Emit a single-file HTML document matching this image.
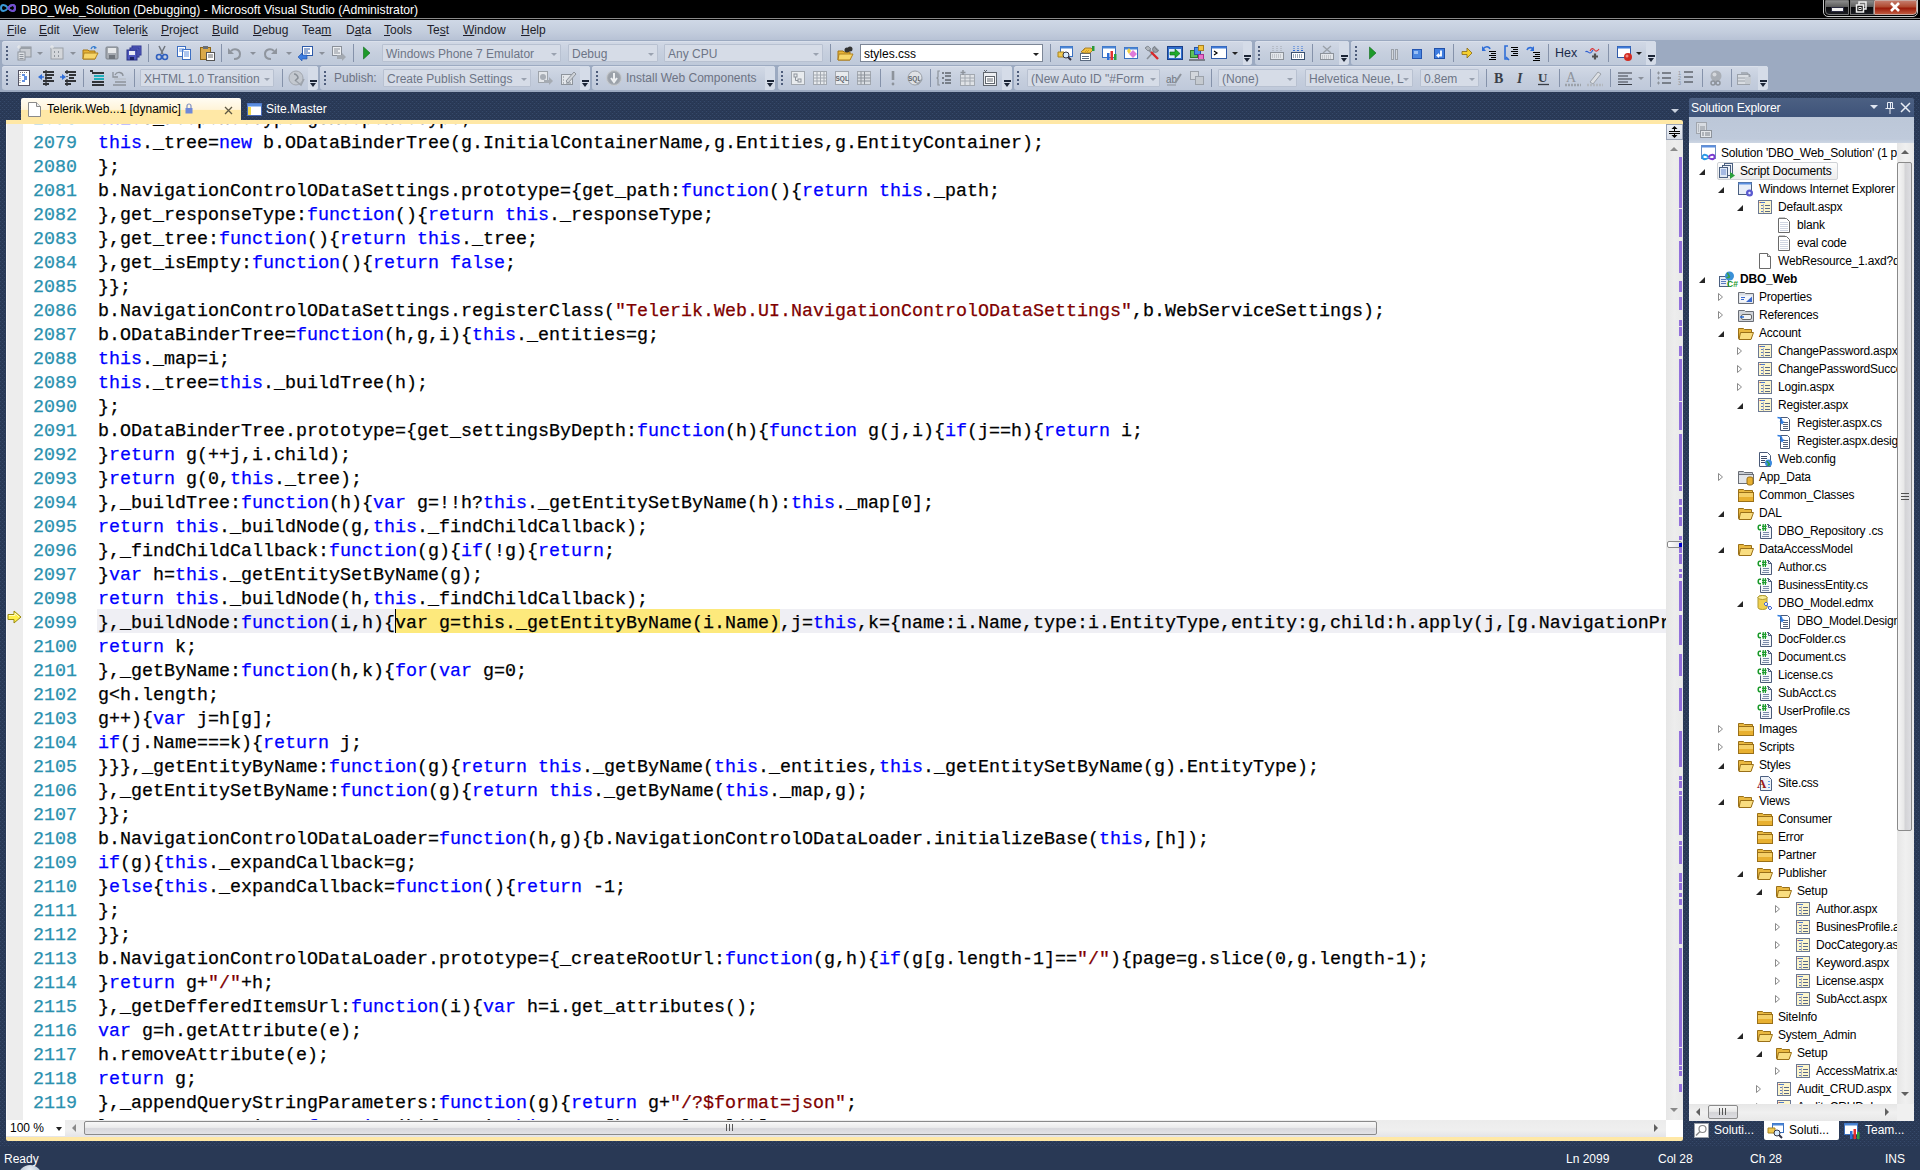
<!DOCTYPE html>
<html><head><meta charset="utf-8">
<style>
*{box-sizing:border-box}
html,body{margin:0;padding:0}
body{width:1920px;height:1170px;overflow:hidden;position:relative;background:#293955;font-family:"Liberation Sans",sans-serif;font-size:12px;color:#000}
.a{position:absolute}
.dots{background-color:#2a3a57;background-image:radial-gradient(circle at 0.5px 0.5px,#36496a 0.7px,transparent 0.8px),radial-gradient(circle at 0.5px 0.5px,#36496a 0.7px,transparent 0.8px),radial-gradient(circle at 0.5px 0.5px,#263551 0.7px,transparent 0.8px),radial-gradient(circle at 0.5px 0.5px,#263551 0.7px,transparent 0.8px);background-size:4px 4px;background-position:0 1px,2px 3px,0 0,2px 2px;background-attachment:fixed}
#title{left:0;top:0;width:1920px;height:18px;background:#000}
#menubar{left:0;top:20px;width:1920px;height:20px;background:linear-gradient(#cfd8e6,#c3cddd 60%,#b7c2d5)}
.mi{position:absolute;top:23px;font-size:12px;color:#1e1e2a;white-space:nowrap}
.mi u{text-decoration:underline;text-underline-offset:1px}
#tray{left:0;top:40px;width:1920px;height:52px;background:#9caac1}
.tb{position:absolute;height:24px;border-radius:3px;background:linear-gradient(#d2d9e6,#c6cfde 50%,#bfc9da);box-shadow:inset 0 1px 0 #dae0eb}
.tbo{position:absolute;height:24px;border-radius:0 3px 3px 0;background:#d5dce8}
.ovb{position:absolute;width:7px;height:1.5px;background:#1c2536}
.ovt{position:absolute;width:0;height:0;border-left:3.5px solid transparent;border-right:3.5px solid transparent;border-top:4px solid #1c2536}
.gd{position:absolute;width:2px;height:2px;background:#4e5d7b}
.sp{position:absolute;width:1px;height:18px;background:#8592aa}
.dd{position:absolute;width:0;height:0;border-left:3px solid transparent;border-right:3px solid transparent;border-top:3px solid #555}
.cb{position:absolute;height:18px;background:#d6dce7;border:1px solid #b8c1d1;border-radius:1px;color:#6d7586;overflow:hidden;white-space:nowrap}
.cb span,.cbw span{position:absolute;left:3px;top:2px;font-size:12px}
.cbw{position:absolute;height:18px;background:#fff;border:1px solid #7d8797;color:#000;overflow:hidden;white-space:nowrap}
.ic{position:absolute;overflow:visible}
.code{font-family:"Liberation Mono",monospace;font-size:18.333px;line-height:24px;white-space:pre}
.k{color:#0000ff}.s{color:#800000}
i,b{font-style:normal;font-weight:normal}
.ln{position:absolute;margin-top:3px;left:33px;-webkit-text-stroke:0.25px currentColor;width:44px;text-align:right;font-family:"Liberation Mono",monospace;font-size:18.333px;line-height:24px;color:#2b91af;white-space:pre}
.cl{position:absolute;margin-top:3px;left:98px;-webkit-text-stroke:0.25px currentColor;font-family:"Liberation Mono",monospace;font-size:18.333px;line-height:24px;color:#000;white-space:pre}


.exe{position:absolute;width:0;height:0;border-bottom:6px solid #262626;border-left:6px solid transparent}
.se{position:absolute;white-space:nowrap;font-size:12px;letter-spacing:-0.2px;line-height:16px;color:#000}
.ua{position:absolute;width:0;height:0;border-left:4px solid transparent;border-right:4px solid transparent;border-bottom:4px solid #606060}
.da{position:absolute;width:0;height:0;border-left:4px solid transparent;border-right:4px solid transparent;border-top:4px solid #606060}
.la{position:absolute;width:0;height:0;border-top:4px solid transparent;border-bottom:4px solid transparent;border-right:4px solid #606060}
.ra{position:absolute;width:0;height:0;border-top:4px solid transparent;border-bottom:4px solid transparent;border-left:4px solid #606060}
</style></head><body>
<div class="a dots" style="left:0;top:92px;width:1920px;height:54px"></div>
<div class="a dots" style="left:0;top:92px;width:6px;height:1054px"></div>
<div class="a dots" style="left:1683px;top:92px;width:237px;height:1054px"></div>
<div class="a" id="title"></div>
<div class="a" style="left:0;top:18px;width:1920px;height:1px;background:#8a8a8a"></div>
<div class="a" style="left:0;top:19px;width:1920px;height:1px;background:#000"></div>
<div class="a" style="left:21px;top:3px;color:#fff;font-size:12.2px;white-space:nowrap">DBO_Web_Solution (Debugging) - Microsoft Visual Studio (Administrator)</div>
<div class="a" id="menubar"></div>
<div class="a" id="tray"></div>
<div class="mi" style="left:7px"><u>F</u>ile</div>
<div class="mi" style="left:39px"><u>E</u>dit</div>
<div class="mi" style="left:73px"><u>V</u>iew</div>
<div class="mi" style="left:113px">Teleri<u>k</u></div>
<div class="mi" style="left:161px"><u>P</u>roject</div>
<div class="mi" style="left:212px"><u>B</u>uild</div>
<div class="mi" style="left:253px"><u>D</u>ebug</div>
<div class="mi" style="left:302px">Tea<u>m</u></div>
<div class="mi" style="left:346px">D<u>a</u>ta</div>
<div class="mi" style="left:384px"><u>T</u>ools</div>
<div class="mi" style="left:427px">Te<u>s</u>t</div>
<div class="mi" style="left:463px"><u>W</u>indow</div>
<div class="mi" style="left:521px"><u>H</u>elp</div>
<div class="tb" style="left:2px;top:41px;width:1250px"></div>
<div class="tbo" style="left:1243px;top:41px;width:9px"></div>
<div class="ovb" style="left:1244px;top:55px"></div><div class="ovt" style="left:1244px;top:58px"></div>
<div class="gd" style="left:6px;top:46px"></div>
<div class="gd" style="left:6px;top:50px"></div>
<div class="gd" style="left:6px;top:54px"></div>
<div class="gd" style="left:6px;top:58px"></div>
<svg class="ic" style="left:16px;top:45px" width="16" height="16" viewBox="0 0 16 16"><rect x="4" y="2" width="11" height="10" fill="#c9cdd3" stroke="#8e949c"/><rect x="4" y="2" width="11" height="2" fill="#9aa0a8"/><rect x="2" y="7" width="7" height="8" fill="#dde0e4" stroke="#8e949c"/><path d="M3.5 9.5h4M3.5 11.5h4M3.5 13.5h4" stroke="#8e949c"/><path d="M3 0v4M1 2h4" stroke="#e8eaec"/></svg>
<svg class="ic" style="left:49px;top:45px" width="16" height="16" viewBox="0 0 16 16"><rect x="2" y="3" width="12" height="11" fill="#d3d6da" stroke="#9a9fa6"/><path d="M5 7h1M9 7h1M5 11h1M9 11h1" stroke="#7c828a" stroke-width="1.5"/><path d="M3 0v4M1 2h4" stroke="#e8eaec"/></svg>
<svg class="ic" style="left:82px;top:45px" width="16" height="16" viewBox="0 0 16 16"><path d="M1 5h5l1 1h6v8H1z" fill="#e8b437" stroke="#a37414"/><path d="M2 8h14l-3 6H1z" fill="#f7d66a" stroke="#b08220"/><path d="M9 4c1-3 4-3 5-1" stroke="#3a7fd0" fill="none" stroke-width="1.3"/><path d="M12 1l3 2-3 1z" fill="#3a7fd0"/></svg>
<svg class="ic" style="left:104px;top:45px" width="16" height="16" viewBox="0 0 16 16"><rect x="2" y="2" width="12" height="12" rx="1" fill="#a4a9b0" stroke="#7d838b"/><rect x="4" y="3" width="8" height="5" fill="#e6e8ea"/><rect x="5" y="10" width="6" height="4" fill="#6f757d"/></svg>
<svg class="ic" style="left:126px;top:45px" width="16" height="16" viewBox="0 0 16 16"><rect x="6" y="1" width="9" height="9" fill="#5a63c8" stroke="#2f3790"/><rect x="4" y="3" width="9" height="9" fill="#5a63c8" stroke="#2f3790"/><rect x="1" y="5" width="10" height="10" fill="#4d56bd" stroke="#2a3285"/><rect x="3" y="6" width="6" height="4" fill="#e7e9f5"/><rect x="4" y="12" width="4" height="3" fill="#1d2266"/></svg>
<svg class="ic" style="left:154px;top:45px" width="16" height="16" viewBox="0 0 16 16"><path d="M5 1l4 8M11 1l-4 8" stroke="#70767e" stroke-width="1.5"/><circle cx="5" cy="12" r="2.5" fill="none" stroke="#2f5fbf" stroke-width="1.6"/><circle cx="11" cy="12" r="2.5" fill="none" stroke="#2f5fbf" stroke-width="1.6"/></svg>
<svg class="ic" style="left:176px;top:45px" width="16" height="16" viewBox="0 0 16 16"><rect x="1.5" y="1.5" width="8" height="10" fill="#fff" stroke="#3d6fc2"/><rect x="6.5" y="4.5" width="8" height="10" fill="#fff" stroke="#3d6fc2"/><path d="M3 4h5M3 6h5M8 7h5M8 9h5M8 11h5" stroke="#5c8ee0"/></svg>
<svg class="ic" style="left:199px;top:45px" width="16" height="16" viewBox="0 0 16 16"><rect x="1.5" y="2.5" width="10" height="12" fill="#d9a94a" stroke="#8d6516"/><rect x="4" y="1" width="5" height="3" fill="#6a6f76"/><rect x="7.5" y="7.5" width="8" height="8" fill="#fff" stroke="#555"/><path d="M9 10h5M9 12h5" stroke="#666"/></svg>
<svg class="ic" style="left:227px;top:45px" width="16" height="16" viewBox="0 0 16 16"><path d="M4 6c3-3 9-2 9 3s-4 5-6 5" stroke="#8f959e" stroke-width="2" fill="none"/><path d="M1 3v6h6z" fill="#8f959e"/></svg>
<svg class="ic" style="left:262px;top:45px" width="16" height="16" viewBox="0 0 16 16"><path d="M12 6c-3-3-9-2-9 3s4 5 6 5" stroke="#8f959e" stroke-width="2" fill="none"/><path d="M15 3v6H9z" fill="#8f959e"/></svg>
<svg class="ic" style="left:297px;top:45px" width="16" height="16" viewBox="0 0 16 16"><rect x="5.5" y="1.5" width="10" height="9" fill="#fff" stroke="#2d5aa8"/><path d="M7 4h6M7 6h4M7 8h6" stroke="#2d5aa8"/><path d="M1 12l4-4v2h5v4H5v2z" fill="#3b7ce0" stroke="#1d4fa8" stroke-width=".6"/></svg>
<svg class="ic" style="left:331px;top:45px" width="16" height="16" viewBox="0 0 16 16"><rect x="1.5" y="1.5" width="9" height="9" fill="#eceef1" stroke="#8a9099"/><path d="M3 4h6M3 6h4M3 8h6" stroke="#8a9099"/><path d="M15 12l-4-4v2H6v4h5v2z" fill="#a3a9b1"/></svg>
<svg class="ic" style="left:359px;top:45px" width="16" height="16" viewBox="0 0 16 16"><path d="M4.5 2l6.5 6-6.5 6z" fill="#1d9a2a" stroke="#0e6a18" stroke-width=".6"/></svg>
<svg class="ic" style="left:837px;top:45px" width="16" height="16" viewBox="0 0 16 16"><path d="M1 6h5l1 1h6v8H1z" fill="#e8b437" stroke="#a37414"/><path d="M2 9h14l-3 6H1z" fill="#f7d66a" stroke="#b08220"/><circle cx="10" cy="5" r="2.5" fill="#333"/><circle cx="13" cy="4" r="2.5" fill="#333"/></svg>
<svg class="ic" style="left:1057px;top:45px" width="16" height="16" viewBox="0 0 16 16"><rect x="3.5" y="1.5" width="12" height="10" fill="#fff" stroke="#3a70c0"/><rect x="3.5" y="1.5" width="12" height="2" fill="#4b86d6"/><path d="M1 7h6v5H1z" fill="#f0c850" stroke="#a88420"/><circle cx="9" cy="10" r="3" fill="#d8ecff" stroke="#334" /><path d="M11 12l3 3" stroke="#334" stroke-width="2"/></svg>
<svg class="ic" style="left:1079px;top:45px" width="16" height="16" viewBox="0 0 16 16"><rect x="1.5" y="8.5" width="10" height="7" fill="#fff" stroke="#5a6a80"/><path d="M3 11.5h7M3 13.5h7" stroke="#5a6a80"/><path d="M2 7l4-4h6l2 2-3 3H5z" fill="#f0c040" stroke="#9a7018" stroke-width=".8"/><path d="M4 6l2-2M6 7l2-2M8 7l2-2" stroke="#c89020" stroke-width=".8"/><rect x="13" y="1" width="2.5" height="5" fill="#2a9a3a"/></svg>
<svg class="ic" style="left:1101px;top:45px" width="16" height="16" viewBox="0 0 16 16"><rect x="1.5" y="1.5" width="13" height="11" fill="#fff" stroke="#3a70c0"/><rect x="1.5" y="1.5" width="13" height="2" fill="#4b86d6"/><rect x="6" y="8" width="2.5" height="7" fill="#2d6fd8"/><rect x="9.5" y="6" width="2.5" height="9" fill="#e23030"/><rect x="13" y="9" width="2.5" height="6" fill="#2aa040"/></svg>
<svg class="ic" style="left:1123px;top:45px" width="16" height="16" viewBox="0 0 16 16"><rect x="1.5" y="2.5" width="13" height="11" fill="#fff" stroke="#3a70c0"/><rect x="1.5" y="2.5" width="13" height="2" fill="#4b86d6"/><path d="M6 9l4-4 4 4-4 4z" fill="#e07ad8"/><path d="M4 6l2-3 2 3-2 3z" fill="#f0d040"/></svg>
<svg class="ic" style="left:1144px;top:45px" width="16" height="16" viewBox="0 0 16 16"><path d="M3 14L13 3" stroke="#8a9098" stroke-width="1.6"/><path d="M11 1.5a3 3 0 1 0 3.5 3.5l-2-.5-1-1z" fill="#9aa0a8" stroke="#6a7078" stroke-width=".8"/><path d="M2 2l5 5" stroke="#8a9098" stroke-width="2.2"/><path d="M7 7l7 7" stroke="#d8282a" stroke-width="2.4"/><path d="M1 3l3-2 3 3-3 2z" fill="#b0b5bc" stroke="#6a7078" stroke-width=".6"/></svg>
<svg class="ic" style="left:1167px;top:45px" width="16" height="16" viewBox="0 0 16 16"><rect x="0.5" y="1.5" width="15" height="13" fill="#2f6dcc" stroke="#1a3f8a"/><rect x="2" y="4" width="12" height="9" fill="#dbe8fb"/><path d="M3 7h5V4l5 4.5-5 4.5v-3H3z" fill="#1faa2a" stroke="#0c6a15" stroke-width=".6"/></svg>
<svg class="ic" style="left:1189px;top:45px" width="16" height="16" viewBox="0 0 16 16"><rect x="1.5" y="5.5" width="7" height="7" fill="#5fc05a" stroke="#2f7a2c"/><rect x="5.5" y="2.5" width="6" height="7" fill="#4a8ee8" stroke="#2355a8"/><rect x="9.5" y="0.5" width="5" height="5" fill="#f2c440" stroke="#a88020"/><rect x="9.5" y="9.5" width="5" height="5" fill="#e870c8" stroke="#a83090"/><rect x="0" y="14" width="16" height="2" fill="#7a808a"/></svg>
<svg class="ic" style="left:1211px;top:45px" width="16" height="16" viewBox="0 0 16 16"><rect x="0.5" y="1.5" width="15" height="12" fill="#fff" stroke="#2f5aa8"/><rect x="0.5" y="1.5" width="15" height="2" fill="#3f7ad8"/><path d="M3 6l3 2-3 2" stroke="#000" stroke-width="1.2" fill="none"/></svg>
<div class="dd" style="left:37px;top:52px;border-top-color:#8a909a"></div>
<div class="dd" style="left:70px;top:52px;border-top-color:#8a909a"></div>
<div class="dd" style="left:250px;top:52px;border-top-color:#8a909a"></div>
<div class="dd" style="left:286px;top:52px;border-top-color:#8a909a"></div>
<div class="dd" style="left:319px;top:52px;border-top-color:#8a909a"></div>
<div class="dd" style="left:1232px;top:52px;border-top-color:#222"></div>
<div class="sp" style="left:148px;top:44px"></div>
<div class="sp" style="left:221px;top:44px"></div>
<div class="sp" style="left:353px;top:44px"></div>
<div class="sp" style="left:830px;top:44px"></div>
<div class="sp" style="left:1050px;top:44px"></div>
<div class="cb" style="left:382px;top:44px;width:179px"><span>Windows Phone 7 Emulator</span><div class="dd" style="left:168px;top:8px;border-top-color:#9aa2b0"></div></div>
<div class="cb" style="left:568px;top:44px;width:90px"><span>Debug</span><div class="dd" style="left:79px;top:8px;border-top-color:#9aa2b0"></div></div>
<div class="cb" style="left:664px;top:44px;width:159px"><span>Any CPU</span><div class="dd" style="left:148px;top:8px;border-top-color:#9aa2b0"></div></div>
<div class="cbw" style="left:860px;top:44px;width:183px"><span>styles.css</span><div class="dd" style="left:172px;top:8px;border-top-color:#222"></div></div>
<div class="tb" style="left:1255px;top:41px;width:94px"></div>
<div class="tbo" style="left:1339px;top:41px;width:10px"></div>
<div class="ovb" style="left:1341px;top:55px"></div><div class="ovt" style="left:1341px;top:58px"></div>
<div class="gd" style="left:1258px;top:46px"></div>
<div class="gd" style="left:1258px;top:50px"></div>
<div class="gd" style="left:1258px;top:54px"></div>
<div class="gd" style="left:1258px;top:58px"></div>
<svg class="ic" style="left:1269px;top:45px" width="16" height="16" viewBox="0 0 16 16"><rect x="1.5" y="7.5" width="13" height="7" fill="#e3e6ea" stroke="#8c929a"/><path d="M3 10h10M3 12h10" stroke="#a2a7ae" stroke-dasharray="1 1"/><path d="M4 1v5M8 1v5M12 1v5" stroke="#a2a7ae" stroke-dasharray="1 1"/></svg>
<svg class="ic" style="left:1290px;top:45px" width="16" height="16" viewBox="0 0 16 16"><rect x="1.5" y="7.5" width="13" height="7" fill="#fff" stroke="#39506f"/><path d="M3 10h10M3 12h10" stroke="#39506f" stroke-dasharray="1 1"/><path d="M4 1v5M8 1v5M12 1v5" stroke="#2f6ed8" stroke-dasharray="1 1"/><path d="M3 5l1 1 1-1M7 5l1 1 1-1M11 5l1 1 1-1" stroke="#2f6ed8"/></svg>
<div class="sp" style="left:1312px;top:44px"></div>
<svg class="ic" style="left:1319px;top:45px" width="16" height="16" viewBox="0 0 16 16"><rect x="1.5" y="8.5" width="13" height="6" fill="#e3e6ea" stroke="#8c929a"/><path d="M3 11h10M3 13h10" stroke="#a2a7ae" stroke-dasharray="1 1"/><path d="M4 1l8 7M12 1L4 8" stroke="#9aa0a8" stroke-width="1.3"/></svg>
<div class="tb" style="left:1351px;top:41px;width:305px"></div>
<div class="tbo" style="left:1646px;top:41px;width:10px"></div>
<div class="ovb" style="left:1648px;top:55px"></div><div class="ovt" style="left:1648px;top:58px"></div>
<div class="gd" style="left:1355px;top:46px"></div>
<div class="gd" style="left:1355px;top:50px"></div>
<div class="gd" style="left:1355px;top:54px"></div>
<div class="gd" style="left:1355px;top:58px"></div>
<svg class="ic" style="left:1365px;top:45px" width="16" height="16" viewBox="0 0 16 16"><path d="M4.5 2l6.5 6-6.5 6z" fill="#1d9a2a" stroke="#0e6a18" stroke-width=".6"/></svg>
<svg class="ic" style="left:1386px;top:45px" width="16" height="16" viewBox="0 0 16 16"><rect x="5.5" y="4.5" width="2" height="10" fill="#d3d7dc" stroke="#9ba1a9"/><rect x="9.5" y="4.5" width="2" height="10" fill="#d3d7dc" stroke="#9ba1a9"/></svg>
<svg class="ic" style="left:1408px;top:45px" width="16" height="16" viewBox="0 0 16 16"><rect x="4.5" y="4.5" width="9" height="9" fill="#4a86e0" stroke="#2455b0"/><rect x="6" y="6" width="4" height="3" fill="#9ac0f5"/></svg>
<svg class="ic" style="left:1431px;top:45px" width="16" height="16" viewBox="0 0 16 16"><rect x="3.5" y="3.5" width="10" height="10" fill="#3f7de0" stroke="#2050a8"/><path d="M10 5.5v5H7" stroke="#fff" stroke-width="1.8" fill="none"/><path d="M8 8v5l-3-2.5z" fill="#fff"/></svg>
<svg class="ic" style="left:1459px;top:45px" width="16" height="16" viewBox="0 0 16 16"><path d="M3 6.5h5V3l5 5-5 5V9.5H3z" fill="#f5d030" stroke="#8a6a10" stroke-width=".8"/></svg>
<svg class="ic" style="left:1481px;top:45px" width="16" height="16" viewBox="0 0 16 16"><path d="M2 4c2-3 6-3 7 0" stroke="#2f6ed8" stroke-width="1.6" fill="none"/><path d="M1 1v5h4z" fill="#2f6ed8"/><path d="M8 6.5h7M10 8.5h5M8 10.5h7M10 12.5h5M8 14.5h7" stroke="#000"/></svg>
<svg class="ic" style="left:1503px;top:45px" width="16" height="16" viewBox="0 0 16 16"><path d="M5 1H2v13h3" stroke="#2f6ed8" stroke-width="1.6" fill="none"/><path d="M3 12l3 3" stroke="#2f6ed8" stroke-width="1.6"/><path d="M8 2.5h7M10 4.5h5M8 6.5h7M10 8.5h5M8 10.5h7" stroke="#000"/></svg>
<svg class="ic" style="left:1525px;top:45px" width="16" height="16" viewBox="0 0 16 16"><path d="M2 5c1-3 5-3 6-1" stroke="#2f6ed8" stroke-width="1.6" fill="none"/><path d="M9 1v5H5z" fill="#2f6ed8"/><path d="M8 7.5h7M10 9.5h5M8 11.5h7M10 13.5h5M8 15.5h7" stroke="#000"/></svg>
<svg class="ic" style="left:1585px;top:45px" width="16" height="16" viewBox="0 0 16 16"><path d="M0.5 7c1.5-2 3 1 4.5 1s2-2 3-3" stroke="#3060d0" stroke-width="1.1" fill="none"/><path d="M5 6c1.5-3 3-3 4.5-1s3 1 4.5-1" stroke="#e03030" stroke-width="1.1" fill="none"/><path d="M7 11.5h6M10 8.5v6" stroke="#505050" stroke-width="2.2"/></svg>
<svg class="ic" style="left:1617px;top:45px" width="16" height="16" viewBox="0 0 16 16"><rect x="0.5" y="1.5" width="13" height="11" fill="#fff" stroke="#2f5aa8"/><rect x="0.5" y="1.5" width="13" height="2" fill="#3f7ad8"/><circle cx="11" cy="12" r="4" fill="#d22a20"/><circle cx="10" cy="11" r="1.5" fill="#f08a80"/></svg>
<div class="sp" style="left:1453px;top:44px"></div>
<div class="sp" style="left:1548px;top:44px"></div>
<div class="sp" style="left:1608px;top:44px"></div>
<div class="dd" style="left:1636px;top:52px;border-top-color:#222"></div>
<div class="a" style="left:1555px;top:46px;font-size:12.5px;color:#1b2a4a">Hex</div>
<div class="tb" style="left:2px;top:66px;width:316px"></div>
<div class="tbo" style="left:308px;top:66px;width:10px"></div>
<div class="ovb" style="left:310px;top:80px"></div><div class="ovt" style="left:310px;top:83px"></div>
<div class="gd" style="left:6px;top:71px"></div>
<div class="gd" style="left:6px;top:75px"></div>
<div class="gd" style="left:6px;top:79px"></div>
<div class="gd" style="left:6px;top:83px"></div>
<svg class="ic" style="left:16px;top:70px" width="16" height="16" viewBox="0 0 16 16"><rect x="2.5" y="0.5" width="11" height="15" fill="#fff" stroke="#556"/><path d="M4 2.5h8M4 4v10" stroke="#777" stroke-dasharray="1 1"/><path d="M6 5h3M8 7h3M8 9h3M6 11h3" stroke="#2f6ed8" stroke-width="1.4"/></svg>
<svg class="ic" style="left:38px;top:70px" width="16" height="16" viewBox="0 0 16 16"><path d="M5 2h11M7 5h9M7 8h7M5 11h11M5 14h6" stroke="#000" stroke-width="1.5"/><path d="M8 0v16" stroke="#000" stroke-dasharray="1 2"/><path d="M0 7l4-3v6z" fill="#2f6ed8"/><path d="M2 7h4" stroke="#2f6ed8" stroke-width="1.4"/></svg>
<svg class="ic" style="left:60px;top:70px" width="16" height="16" viewBox="0 0 16 16"><path d="M5 2h11M9 5h7M9 8h5M5 11h11M5 14h6" stroke="#000" stroke-width="1.5"/><path d="M7 0v16" stroke="#000" stroke-dasharray="1 2"/><path d="M6 7L2 4v6z" fill="#2f6ed8"/><path d="M0 7h4" stroke="#2f6ed8" stroke-width="1.4"/></svg>
<svg class="ic" style="left:89px;top:70px" width="16" height="16" viewBox="0 0 16 16"><path d="M1 1h3M3 3h12M5 6h10M5 9h10M3 12h12M3 15h12" stroke="#000" stroke-width="1.3"/><path d="M5 6h10M5 9h10" stroke="#1ad6e8" stroke-width="1.4"/></svg>
<svg class="ic" style="left:111px;top:70px" width="16" height="16" viewBox="0 0 16 16"><path d="M4 5c2-4 8-3 8 1" stroke="#8d939b" stroke-width="1.3" fill="none"/><path d="M2 2v5h5" stroke="#8d939b" fill="none" stroke-width="1.3"/><path d="M4 12h11M2 15h13" stroke="#8d939b" stroke-width="1.3"/><path d="M3 9h12" stroke="#b5bac1"/></svg>
<svg class="ic" style="left:288px;top:70px" width="16" height="16" viewBox="0 0 16 16"><circle cx="8" cy="8" r="7" fill="#c3c8cf" stroke="#a3a8b0"/><path d="M6 4c2 0 4 2 4 4l-3 3" stroke="#8a9098" stroke-width="1.6" fill="none"/><path d="M8 11l5 4 3-6" stroke="#9ca2aa" stroke-width="1.5" fill="none"/></svg>
<div class="sp" style="left:83px;top:69px"></div>
<div class="sp" style="left:134px;top:69px"></div>
<div class="sp" style="left:282px;top:69px"></div>
<div class="cb" style="left:140px;top:69px;width:134px"><span>XHTML 1.0 Transition</span><div class="dd" style="left:123px;top:8px;border-top-color:#9aa2b0"></div></div>
<div class="tb" style="left:320px;top:66px;width:270px"></div>
<div class="tbo" style="left:580px;top:66px;width:10px"></div>
<div class="ovb" style="left:582px;top:80px"></div><div class="ovt" style="left:582px;top:83px"></div>
<div class="gd" style="left:324px;top:71px"></div>
<div class="gd" style="left:324px;top:75px"></div>
<div class="gd" style="left:324px;top:79px"></div>
<div class="gd" style="left:324px;top:83px"></div>
<div class="a" style="left:334px;top:71px;color:#6d7383">Publish:</div>
<div class="cb" style="left:383px;top:69px;width:148px"><span>Create Publish Settings</span><div class="dd" style="left:137px;top:8px;border-top-color:#9aa2b0"></div></div>
<svg class="ic" style="left:537px;top:70px" width="16" height="16" viewBox="0 0 16 16"><rect x="1.5" y="1.5" width="9" height="11" fill="#e3e6ea" stroke="#9ea4ab"/><circle cx="6" cy="7" r="3" fill="#a8aeb6"/><path d="M7 10h5V7l4 4-4 4v-2H7z" fill="#a5abb3"/></svg>
<svg class="ic" style="left:560px;top:70px" width="16" height="16" viewBox="0 0 16 16"><rect x="1.5" y="4.5" width="11" height="10" fill="#e3e6ea" stroke="#8e949c"/><path d="M3 7h1M3 10h1M3 13h1M6 13h5" stroke="#7f858d"/><path d="M6 11l8-9 2 2-8 9z" fill="#cfd3d8" stroke="#8e949c"/></svg>
<div class="tb" style="left:592px;top:66px;width:183px"></div>
<div class="tbo" style="left:765px;top:66px;width:10px"></div>
<div class="ovb" style="left:767px;top:80px"></div><div class="ovt" style="left:767px;top:83px"></div>
<div class="gd" style="left:596px;top:71px"></div>
<div class="gd" style="left:596px;top:75px"></div>
<div class="gd" style="left:596px;top:79px"></div>
<div class="gd" style="left:596px;top:83px"></div>
<svg class="ic" style="left:606px;top:70px" width="16" height="16" viewBox="0 0 16 16"><circle cx="8" cy="8" r="7.5" fill="#a9aeb5" stroke="#c8ccd1"/><circle cx="8" cy="8" r="6" fill="#9ba1a9"/><path d="M8 3v7M5 8l3 4 3-4" stroke="#eef0f2" stroke-width="2" fill="none"/></svg>
<div class="a" style="left:626px;top:71px;color:#6d7383">Install Web Components</div>
<div class="tb" style="left:778px;top:66px;width:234px"></div>
<div class="tbo" style="left:1002px;top:66px;width:10px"></div>
<div class="ovb" style="left:1004px;top:80px"></div><div class="ovt" style="left:1004px;top:83px"></div>
<div class="gd" style="left:781px;top:71px"></div>
<div class="gd" style="left:781px;top:75px"></div>
<div class="gd" style="left:781px;top:79px"></div>
<div class="gd" style="left:781px;top:83px"></div>
<svg class="ic" style="left:790px;top:70px" width="16" height="16" viewBox="0 0 16 16"><rect x="1.5" y="1.5" width="13" height="13" fill="#e8ebee" stroke="#a2a8b0"/><rect x="4" y="4" width="3" height="3" fill="none" stroke="#8d939b"/><rect x="8" y="9" width="3" height="3" fill="none" stroke="#8d939b"/><path d="M5.5 7v3.5H8" stroke="#8d939b" fill="none"/></svg>
<svg class="ic" style="left:812px;top:70px" width="16" height="16" viewBox="0 0 16 16"><rect x="1.5" y="1.5" width="13" height="13" fill="#e8ebee" stroke="#a2a8b0"/><path d="M1.5 5h13M1.5 8h13M1.5 11h13M5 1.5v13M8.5 1.5v13M12 1.5v13" stroke="#a2a8b0"/></svg>
<svg class="ic" style="left:834px;top:70px" width="16" height="16" viewBox="0 0 16 16"><rect x="1.5" y="1.5" width="13" height="13" fill="#e8ebee" stroke="#a2a8b0"/><text x="1.5" y="11" font-size="6.5" font-family="Liberation Sans" fill="#60666e" font-weight="bold">SQL</text></svg>
<svg class="ic" style="left:856px;top:70px" width="16" height="16" viewBox="0 0 16 16"><rect x="1.5" y="1.5" width="13" height="13" fill="#d9dde2" stroke="#a2a8b0"/><path d="M1.5 5h13M1.5 8h13M1.5 11h13M5 1.5v13M8.5 1.5v13" stroke="#8d939b"/></svg>
<svg class="ic" style="left:885px;top:70px" width="16" height="16" viewBox="0 0 16 16"><path d="M8 1v9" stroke="#8d939b" stroke-width="2.6"/><circle cx="8" cy="14" r="1.4" fill="#8d939b"/></svg>
<svg class="ic" style="left:907px;top:70px" width="16" height="16" viewBox="0 0 16 16"><ellipse cx="8" cy="8" rx="7" ry="7" fill="#dfe2e6" stroke="#9ca2aa"/><text x="1" y="10.5" font-size="6.5" font-family="Liberation Sans" fill="#60666e" font-weight="bold">SQL</text><path d="M9 12l2 2 4-5" stroke="#9ca2aa" stroke-width="1.5" fill="none"/></svg>
<svg class="ic" style="left:936px;top:70px" width="16" height="16" viewBox="0 0 16 16"><path d="M4 1H2v6l-1 1 1 1v6h2" stroke="#8d939b" fill="none" stroke-width="1.2"/><path d="M6 3h2M6 8h2M6 13h2M9 3h6M9 6h6M9 10h6M9 13h6" stroke="#60666e" stroke-width="1.3"/></svg>
<svg class="ic" style="left:959px;top:70px" width="16" height="16" viewBox="0 0 16 16"><rect x="1.5" y="4.5" width="14" height="11" fill="#dfe2e6" stroke="#a2a8b0"/><path d="M1.5 8h14M1.5 11h14M6 4.5v11M11 4.5v11" stroke="#a2a8b0"/><path d="M4 0v5M1.5 2.5h5" stroke="#8d939b" stroke-width="1.4"/></svg>
<svg class="ic" style="left:981px;top:70px" width="16" height="16" viewBox="0 0 16 16"><rect x="2.5" y="2.5" width="13" height="13" fill="#eceef1" stroke="#60666e"/><rect x="4.5" y="6.5" width="9" height="7" fill="#fff" stroke="#60666e"/><path d="M6 9h6M6 11h6" stroke="#60666e"/><path d="M3 0l3 3M6 0L3 3" stroke="#60666e"/></svg>
<div class="sp" style="left:880px;top:69px"></div>
<div class="sp" style="left:930px;top:69px"></div>
<div class="tb" style="left:1014px;top:66px;width:754px"></div>
<div class="tbo" style="left:1758px;top:66px;width:10px"></div>
<div class="ovb" style="left:1760px;top:80px"></div><div class="ovt" style="left:1760px;top:83px"></div>
<div class="gd" style="left:1017px;top:71px"></div>
<div class="gd" style="left:1017px;top:75px"></div>
<div class="gd" style="left:1017px;top:79px"></div>
<div class="gd" style="left:1017px;top:83px"></div>
<div class="cb" style="left:1027px;top:69px;width:133px"><span>(New Auto ID "#Form</span><div class="dd" style="left:122px;top:8px;border-top-color:#9aa2b0"></div></div>
<svg class="ic" style="left:1166px;top:70px" width="16" height="16" viewBox="0 0 16 16"><text x="0" y="13" font-size="10" font-family="Liberation Sans" fill="#70767e">ab</text><path d="M9 13l6-9" stroke="#8d939b" stroke-width="2"/><path d="M1 15h9" stroke="#8d939b"/></svg>
<svg class="ic" style="left:1189px;top:70px" width="16" height="16" viewBox="0 0 16 16"><rect x="1.5" y="1.5" width="8" height="8" fill="#d3d7dc" stroke="#9ca2aa"/><rect x="6.5" y="6.5" width="8" height="8" fill="#c5cad0" stroke="#9ca2aa"/></svg>
<div class="sp" style="left:1211px;top:69px"></div>
<div class="cb" style="left:1218px;top:69px;width:79px"><span>(None)</span><div class="dd" style="left:68px;top:8px;border-top-color:#9aa2b0"></div></div>
<div class="cb" style="left:1305px;top:69px;width:108px"><span>Helvetica Neue, L</span><div class="dd" style="left:97px;top:8px;border-top-color:#9aa2b0"></div></div>
<div class="cb" style="left:1420px;top:69px;width:59px"><span>0.8em</span><div class="dd" style="left:48px;top:8px;border-top-color:#9aa2b0"></div></div>
<div class="sp" style="left:1486px;top:69px"></div>
<svg class="ic" style="left:1492px;top:70px" width="16" height="16" viewBox="0 0 16 16"><text x="2" y="13" font-size="14" font-family="Liberation Serif" font-weight="bold" fill="#3a3f48">B</text></svg>
<svg class="ic" style="left:1514px;top:70px" width="16" height="16" viewBox="0 0 16 16"><text x="3" y="13" font-size="14" font-family="Liberation Serif" font-style="italic" font-weight="bold" fill="#3a3f48">I</text></svg>
<svg class="ic" style="left:1536px;top:70px" width="16" height="16" viewBox="0 0 16 16"><text x="2" y="12" font-size="13" font-family="Liberation Serif" font-weight="bold" fill="#3a3f48">U</text><path d="M2 14.5h11" stroke="#3a3f48" stroke-width="1.3"/></svg>
<svg class="ic" style="left:1565px;top:70px" width="16" height="16" viewBox="0 0 16 16"><text x="1" y="12" font-size="14" font-family="Liberation Serif" fill="#8e949c">A</text><path d="M0 15h16" stroke="#9ca2aa" stroke-width="2.5" stroke-dasharray="2 1"/></svg>
<svg class="ic" style="left:1587px;top:70px" width="16" height="16" viewBox="0 0 16 16"><path d="M3 12l8-10 3 2-8 10z" fill="#dde0e4" stroke="#9ca2aa"/><path d="M0 15h16" stroke="#b3b8bf" stroke-width="2.5" stroke-dasharray="2 1"/></svg>
<svg class="ic" style="left:1617px;top:70px" width="16" height="16" viewBox="0 0 16 16"><path d="M1 3h14M1 6h10M1 9h14M1 12h10M1 14.5h14" stroke="#3a3f48" stroke-width="1.2"/></svg>
<svg class="ic" style="left:1656px;top:70px" width="16" height="16" viewBox="0 0 16 16"><path d="M6 3h9M6 8h9M6 13h9" stroke="#60666e" stroke-width="1.6"/><path d="M1 3h3M2.5 1.5v3M1 8h3M2.5 6.5v3M1 13h3M2.5 11.5v3" stroke="#8d939b"/></svg>
<svg class="ic" style="left:1678px;top:70px" width="16" height="16" viewBox="0 0 16 16"><path d="M6 2h9M6 7h9M6 12h9" stroke="#60666e" stroke-width="1.6"/><text x="0" y="5" font-size="5.5" font-family="Liberation Sans" fill="#8d939b">1</text><text x="0" y="10" font-size="5.5" font-family="Liberation Sans" fill="#8d939b">2</text><text x="0" y="15" font-size="5.5" font-family="Liberation Sans" fill="#8d939b">3</text></svg>
<svg class="ic" style="left:1708px;top:70px" width="16" height="16" viewBox="0 0 16 16"><circle cx="8" cy="6" r="5.5" fill="#a9aeb5"/><circle cx="6.5" cy="4.5" r="2" fill="#d5d8dc"/><path d="M3 13a2 2 0 0 1 4 0a2 2 0 0 1-4 0M8 13a2 2 0 0 1 4 0a2 2 0 0 1-4 0" stroke="#8d939b" fill="none" stroke-width="1.5"/></svg>
<svg class="ic" style="left:1736px;top:70px" width="16" height="16" viewBox="0 0 16 16"><rect x="1.5" y="4.5" width="12" height="10" fill="#d9dde2" stroke="#9ca2aa"/><path d="M1.5 8h12M1.5 11h12" stroke="#9ca2aa"/><path d="M5 3h6l3 3-3 3" stroke="#9ca2aa" fill="none" stroke-width="1.4"/><rect x="9" y="7" width="6" height="7" fill="#c5cad0"/></svg>
<div class="dd" style="left:1638px;top:77px;border-top-color:#8a909a"></div>
<div class="sp" style="left:1559px;top:69px"></div>
<div class="sp" style="left:1610px;top:69px"></div>
<div class="sp" style="left:1650px;top:69px"></div>
<div class="sp" style="left:1702px;top:69px"></div>
<div class="sp" style="left:1731px;top:69px"></div>

<!-- editor frame -->
<div class="a" style="left:6px;top:120px;width:1677px;height:1021px;background:#ffe8a6;border-radius:0 2px 2px 2px"></div>
<div class="a" style="left:6px;top:124px;width:1677px;height:996px;background:#fff"></div>
<div class="a" style="left:6px;top:124px;width:17px;height:996px;background:#ededed;border-left:1px solid #f8f8f8"></div>
<div class="a" id="ed" style="left:6px;top:124px;width:1660px;height:996px;overflow:hidden">
<div class="a" style="left:91px;top:485px;width:1569px;height:24px;background:#efeff4"></div>
<div class="a" style="left:389px;top:485px;width:385px;height:24px;background:#fde97c"></div>
<div class="a" style="left:-6px;top:-124px;width:1666px;height:1200px">
<div class="ln" style="top:105px">2078</div><div class="cl" style="top:105px"><i class="k">this</i>._responseType=g.ResponseType;</div>
<div class="ln" style="top:129px">2079</div><div class="cl" style="top:129px"><i class="k">this</i>._tree=<i class="k">new</i> b.ODataBinderTree(g.InitialContainerName,g.Entities,g.EntityContainer);</div>
<div class="ln" style="top:153px">2080</div><div class="cl" style="top:153px">};</div>
<div class="ln" style="top:177px">2081</div><div class="cl" style="top:177px">b.NavigationControlODataSettings.prototype={get_path:<i class="k">function</i>(){<i class="k">return</i> <i class="k">this</i>._path;</div>
<div class="ln" style="top:201px">2082</div><div class="cl" style="top:201px">},get_responseType:<i class="k">function</i>(){<i class="k">return</i> <i class="k">this</i>._responseType;</div>
<div class="ln" style="top:225px">2083</div><div class="cl" style="top:225px">},get_tree:<i class="k">function</i>(){<i class="k">return</i> <i class="k">this</i>._tree;</div>
<div class="ln" style="top:249px">2084</div><div class="cl" style="top:249px">},get_isEmpty:<i class="k">function</i>(){<i class="k">return</i> <i class="k">false</i>;</div>
<div class="ln" style="top:273px">2085</div><div class="cl" style="top:273px">}};</div>
<div class="ln" style="top:297px">2086</div><div class="cl" style="top:297px">b.NavigationControlODataSettings.registerClass(<i class="s">&quot;Telerik.Web.UI.NavigationControlODataSettings&quot;</i>,b.WebServiceSettings);</div>
<div class="ln" style="top:321px">2087</div><div class="cl" style="top:321px">b.ODataBinderTree=<i class="k">function</i>(h,g,i){<i class="k">this</i>._entities=g;</div>
<div class="ln" style="top:345px">2088</div><div class="cl" style="top:345px"><i class="k">this</i>._map=i;</div>
<div class="ln" style="top:369px">2089</div><div class="cl" style="top:369px"><i class="k">this</i>._tree=<i class="k">this</i>._buildTree(h);</div>
<div class="ln" style="top:393px">2090</div><div class="cl" style="top:393px">};</div>
<div class="ln" style="top:417px">2091</div><div class="cl" style="top:417px">b.ODataBinderTree.prototype={get_settingsByDepth:<i class="k">function</i>(h){<i class="k">function</i> g(j,i){<i class="k">if</i>(j==h){<i class="k">return</i> i;</div>
<div class="ln" style="top:441px">2092</div><div class="cl" style="top:441px">}<i class="k">return</i> g(++j,i.child);</div>
<div class="ln" style="top:465px">2093</div><div class="cl" style="top:465px">}<i class="k">return</i> g(0,<i class="k">this</i>._tree);</div>
<div class="ln" style="top:489px">2094</div><div class="cl" style="top:489px">},_buildTree:<i class="k">function</i>(h){<i class="k">var</i> g=!!h?<i class="k">this</i>._getEntitySetByName(h):<i class="k">this</i>._map[0];</div>
<div class="ln" style="top:513px">2095</div><div class="cl" style="top:513px"><i class="k">return</i> <i class="k">this</i>._buildNode(g,<i class="k">this</i>._findChildCallback);</div>
<div class="ln" style="top:537px">2096</div><div class="cl" style="top:537px">},_findChildCallback:<i class="k">function</i>(g){<i class="k">if</i>(!g){<i class="k">return</i>;</div>
<div class="ln" style="top:561px">2097</div><div class="cl" style="top:561px">}<i class="k">var</i> h=<i class="k">this</i>._getEntitySetByName(g);</div>
<div class="ln" style="top:585px">2098</div><div class="cl" style="top:585px"><i class="k">return</i> <i class="k">this</i>._buildNode(h,<i class="k">this</i>._findChildCallback);</div>
<div class="ln" style="top:609px">2099</div><div class="cl" style="top:609px">},_buildNode:<i class="k">function</i>(i,h){<b class="hl">var g=this._getEntityByName(i.Name)</b>,j=<i class="k">this</i>,k={name:i.Name,type:i.EntityType,entity:g,child:h.apply(j,[g.NavigationPr</div>
<div class="ln" style="top:633px">2100</div><div class="cl" style="top:633px"><i class="k">return</i> k;</div>
<div class="ln" style="top:657px">2101</div><div class="cl" style="top:657px">},_getByName:<i class="k">function</i>(h,k){<i class="k">for</i>(<i class="k">var</i> g=0;</div>
<div class="ln" style="top:681px">2102</div><div class="cl" style="top:681px">g&lt;h.length;</div>
<div class="ln" style="top:705px">2103</div><div class="cl" style="top:705px">g++){<i class="k">var</i> j=h[g];</div>
<div class="ln" style="top:729px">2104</div><div class="cl" style="top:729px"><i class="k">if</i>(j.Name===k){<i class="k">return</i> j;</div>
<div class="ln" style="top:753px">2105</div><div class="cl" style="top:753px">}}},_getEntityByName:<i class="k">function</i>(g){<i class="k">return</i> <i class="k">this</i>._getByName(<i class="k">this</i>._entities,<i class="k">this</i>._getEntitySetByName(g).EntityType);</div>
<div class="ln" style="top:777px">2106</div><div class="cl" style="top:777px">},_getEntitySetByName:<i class="k">function</i>(g){<i class="k">return</i> <i class="k">this</i>._getByName(<i class="k">this</i>._map,g);</div>
<div class="ln" style="top:801px">2107</div><div class="cl" style="top:801px">}};</div>
<div class="ln" style="top:825px">2108</div><div class="cl" style="top:825px">b.NavigationControlODataLoader=<i class="k">function</i>(h,g){b.NavigationControlODataLoader.initializeBase(<i class="k">this</i>,[h]);</div>
<div class="ln" style="top:849px">2109</div><div class="cl" style="top:849px"><i class="k">if</i>(g){<i class="k">this</i>._expandCallback=g;</div>
<div class="ln" style="top:873px">2110</div><div class="cl" style="top:873px">}<i class="k">else</i>{<i class="k">this</i>._expandCallback=<i class="k">function</i>(){<i class="k">return</i> -1;</div>
<div class="ln" style="top:897px">2111</div><div class="cl" style="top:897px">};</div>
<div class="ln" style="top:921px">2112</div><div class="cl" style="top:921px">}};</div>
<div class="ln" style="top:945px">2113</div><div class="cl" style="top:945px">b.NavigationControlODataLoader.prototype={_createRootUrl:<i class="k">function</i>(g,h){<i class="k">if</i>(g[g.length-1]==<i class="s">&quot;/&quot;</i>){page=g.slice(0,g.length-1);</div>
<div class="ln" style="top:969px">2114</div><div class="cl" style="top:969px">}<i class="k">return</i> g+<i class="s">&quot;/&quot;</i>+h;</div>
<div class="ln" style="top:993px">2115</div><div class="cl" style="top:993px">},_getDefferedItemsUrl:<i class="k">function</i>(i){<i class="k">var</i> h=i.get_attributes();</div>
<div class="ln" style="top:1017px">2116</div><div class="cl" style="top:1017px"><i class="k">var</i> g=h.getAttribute(e);</div>
<div class="ln" style="top:1041px">2117</div><div class="cl" style="top:1041px">h.removeAttribute(e);</div>
<div class="ln" style="top:1065px">2118</div><div class="cl" style="top:1065px"><i class="k">return</i> g;</div>
<div class="ln" style="top:1089px">2119</div><div class="cl" style="top:1089px">},_appendQueryStringParameters:<i class="k">function</i>(g){<i class="k">return</i> g+<i class="s">&quot;/?$format=json&quot;</i>;</div>
<div class="ln" style="top:1113px">2120</div><div class="cl" style="top:1113px">},_getItemSettings:<i class="k">function</i>(h){<i class="k">var</i> i=<i class="k">this</i>._map[h.get_level()];</div>
</div>
<div class="a" style="left:389px;top:485px;width:1px;height:24px;background:#000"></div>
</div>


<svg class="ic" style="left:7px;top:610px" width="15" height="14" viewBox="0 0 15 14"><path d="M1 4.5h6V1l7 6-7 6V9.5H1z" fill="#fff04a" stroke="#9a8a10" stroke-linejoin="round"/><path d="M2 5.5h6V3l4 4" stroke="#fffbc0" fill="none"/></svg>
<div class="a" style="left:1689px;top:117px;width:225px;height:1004px;background:#fff"></div>
<div class="a" style="left:1689px;top:98px;width:225px;height:19px;border-radius:2px 2px 0 0;background:linear-gradient(#4c6083,#3e5379)"></div>
<div class="a" style="left:1691px;top:101px;color:#fff;font-size:12.2px;letter-spacing:-0.2px;white-space:nowrap">Solution Explorer</div>
<div class="dd" style="left:1870px;top:105px;border-left-width:4px;border-right-width:4px;border-top:4px solid #dfe5f0"></div>
<svg class="ic" style="left:1884px;top:101px" width="12" height="13" viewBox="0 0 12 13"><path d="M3.5 1.5h5v6h-5zM1.5 7.5h9M6 8v5" stroke="#e8ecf4" fill="none"/><path d="M6.5 2v5" stroke="#e8ecf4"/></svg>
<svg class="ic" style="left:1900px;top:102px" width="11" height="11" viewBox="0 0 11 11"><path d="M1 1l9 9M10 1L1 10" stroke="#e8ecf4" stroke-width="1.5"/></svg>
<div class="a" style="left:1689px;top:117px;width:225px;height:26px;background:linear-gradient(#bcc7d8,#bfcadb 85%,#cdd6e3)"></div>
<svg class="ic" style="left:1696px;top:122px" width="16" height="16" viewBox="0 0 16 16"><rect x="0.5" y="0.5" width="10" height="11" fill="#d8dce2" stroke="#a0a5ad"/><path d="M2 3h1M2 5h1M2 7h1M2 9h1M4 5h5M4 7h5" stroke="#8d939b"/><rect x="4.5" y="8.5" width="11" height="7" fill="#e3e6ea" stroke="#8d939b"/><path d="M6 11h2M6 13h2M9 11h5M9 13h5" stroke="#7a8088"/></svg>
<div class="a" style="left:1689px;top:143px;width:208px;height:961px;overflow:hidden">
<svg class="ic" style="left:11px;top:2px" width="16" height="16" viewBox="0 0 16 16"><rect x="1.5" y="0.5" width="14" height="13" fill="#fff" stroke="#6f8fc0"/><rect x="1.5" y="0.5" width="14" height="2" fill="#5b8fe0"/><path d="M8.5 12c-2-3-6-3-6 0s4 3 6 0" stroke="#2a9ae8" stroke-width="1.8" fill="none"/><path d="M8.5 12c2-3 6-3 6 0s-4 3-6 0" stroke="#7a3ad0" stroke-width="1.8" fill="none"/></svg>
<div class="se" style="left:32px;top:2px">Solution 'DBO_Web_Solution' (1 project)</div>
<div class="a" style="left:28px;top:19px;width:121px;height:18px;border:1px solid #cfd2d6;border-radius:2px;background:linear-gradient(#fdfdfd,#ececec)"></div>
<div class="exe" style="left:10px;top:26px"></div>
<svg class="ic" style="left:30px;top:20px" width="16" height="16" viewBox="0 0 16 16"><rect x="5.5" y="0.5" width="8" height="10" fill="#eef2f8" stroke="#4a5f80"/><rect x="3.5" y="2.5" width="8" height="10" fill="#eef2f8" stroke="#4a5f80"/><rect x="0.5" y="4.5" width="8" height="10" fill="#dfe8f5" stroke="#4a5f80"/><path d="M2 7h5M2 9h5M2 11h5" stroke="#6a8ad0"/><path d="M11 9l5 3.5-5 3.5z" fill="#2aa03a"/></svg>
<div class="se" style="left:51px;top:20px">Script Documents</div>
<div class="exe" style="left:29px;top:44px"></div>
<svg class="ic" style="left:49px;top:38px" width="16" height="16" viewBox="0 0 16 16"><rect x="0.5" y="1.5" width="13" height="12" fill="#e8eef8" stroke="#4a5f80"/><rect x="0.5" y="1.5" width="13" height="2" fill="#5b8fe0"/><circle cx="11.5" cy="12" r="3.5" fill="#5a5ad0"/><circle cx="11.5" cy="12" r="1.2" fill="#e8e8ff"/></svg>
<div class="se" style="left:70px;top:38px">Windows Internet Explorer</div>
<div class="exe" style="left:48px;top:62px"></div>
<svg class="ic" style="left:68px;top:56px" width="16" height="16" viewBox="0 0 16 16"><rect x="1.5" y="1.5" width="13" height="13" fill="#fdf6cc" stroke="#6a7894"/><path d="M3 3.5h5" stroke="#4a7ad0"/><path d="M2.5 3.5h1" stroke="#d03030"/><path d="M4 6.5h2M4 9.5h2M4 12.5h2" stroke="#5a7ac0"/><path d="M8 6.5h5M8 9.5h5M8 12.5h5" stroke="#5a6a88"/><path d="M6.5 5v9" stroke="#b8b8b8"/></svg>
<div class="se" style="left:89px;top:56px">Default.aspx</div>
<svg class="ic" style="left:87px;top:74px" width="16" height="16" viewBox="0 0 16 16"><path d="M2.5 1.5h8l3 3v11h-11z" fill="#fff" stroke="#6a6a6a"/><path d="M4 5.5h8M4 7.5h8M4 9.5h8M4 11.5h8M4 13.5h8" stroke="#d0d6e2"/><path d="M3 1.5l1-1 1 1 1-1 1 1 1-1 1 1" stroke="#888" fill="none"/></svg>
<div class="se" style="left:108px;top:74px">blank</div>
<svg class="ic" style="left:87px;top:92px" width="16" height="16" viewBox="0 0 16 16"><path d="M2.5 1.5h8l3 3v11h-11z" fill="#fff" stroke="#6a6a6a"/><path d="M4 5.5h8M4 7.5h8M4 9.5h8M4 11.5h8M4 13.5h8" stroke="#d0d6e2"/><path d="M3 1.5l1-1 1 1 1-1 1 1 1-1 1 1" stroke="#888" fill="none"/></svg>
<div class="se" style="left:108px;top:92px">eval code</div>
<svg class="ic" style="left:68px;top:110px" width="16" height="16" viewBox="0 0 16 16"><path d="M2.5 0.5h8l3 3v12h-11z" fill="#fff" stroke="#6a6a6a"/><path d="M10.5 0.5v3h3" fill="#eee" stroke="#6a6a6a"/></svg>
<div class="se" style="left:89px;top:110px">WebResource_1.axd?d=ABCDEF</div>
<div class="exe" style="left:10px;top:134px"></div>
<svg class="ic" style="left:30px;top:128px" width="16" height="16" viewBox="0 0 16 16"><rect x="0.5" y="5.5" width="9" height="10" fill="#e8eef8" stroke="#4a5f80"/><path d="M2 8.5h5M2 10.5h5M2 12.5h5" stroke="#5a7ac0"/><circle cx="10.5" cy="5" r="4.5" fill="#3a90d8"/><path d="M8 2c2 1 1 3 3 4M7.5 6.5h3" stroke="#3aa040" stroke-width="1.5"/><text x="8" y="16" font-size="8.5" font-weight="bold" font-family="Liberation Sans" fill="#1a9a2a">C#</text></svg>
<div class="se" style="left:51px;top:128px;font-weight:bold">DBO_Web</div>
<svg class="ic" style="left:28px;top:149px" width="7" height="10" viewBox="0 0 7 10"><path d="M1.5 1.5l4 3.5-4 3.5z" fill="#fff" stroke="#8a8a8a"/></svg>
<svg class="ic" style="left:49px;top:146px" width="16" height="16" viewBox="0 0 16 16"><path d="M0.5 3.5h6l1 1h8v10h-15z" fill="#d8dce2" stroke="#6a6e76"/><rect x="1.5" y="6.5" width="13" height="7" fill="#f4f6fa"/><path d="M3 8.5h4M3 10.5h3" stroke="#3a6ad0"/><path d="M8 13l6-5.5V13z" fill="#3a6ad0"/></svg>
<div class="se" style="left:70px;top:146px">Properties</div>
<svg class="ic" style="left:28px;top:167px" width="7" height="10" viewBox="0 0 7 10"><path d="M1.5 1.5l4 3.5-4 3.5z" fill="#fff" stroke="#8a8a8a"/></svg>
<svg class="ic" style="left:49px;top:164px" width="16" height="16" viewBox="0 0 16 16"><path d="M0.5 3.5h6l1 1h8v10h-15z" fill="#d0d4da" stroke="#6a6e76"/><rect x="3.5" y="7.5" width="10" height="5" rx="1.5" fill="#f0f2f4" stroke="#666"/><path d="M2 10h4" stroke="#2a6ad0" stroke-width="1.5"/></svg>
<div class="se" style="left:70px;top:164px">References</div>
<div class="exe" style="left:29px;top:188px"></div>
<svg class="ic" style="left:49px;top:182px" width="16" height="16" viewBox="0 0 16 16"><path d="M0.5 3.5h5l1 1h7v9h-13z" fill="#e9b840" stroke="#9a7018"/><path d="M2.5 7.5h13l-2.5 7h-12z" fill="#f9dd80" stroke="#9a7018"/></svg>
<div class="se" style="left:70px;top:182px">Account</div>
<svg class="ic" style="left:47px;top:203px" width="7" height="10" viewBox="0 0 7 10"><path d="M1.5 1.5l4 3.5-4 3.5z" fill="#fff" stroke="#8a8a8a"/></svg>
<svg class="ic" style="left:68px;top:200px" width="16" height="16" viewBox="0 0 16 16"><rect x="1.5" y="1.5" width="13" height="13" fill="#fdf6cc" stroke="#6a7894"/><path d="M3 3.5h5" stroke="#4a7ad0"/><path d="M2.5 3.5h1" stroke="#d03030"/><path d="M4 6.5h2M4 9.5h2M4 12.5h2" stroke="#5a7ac0"/><path d="M8 6.5h5M8 9.5h5M8 12.5h5" stroke="#5a6a88"/><path d="M6.5 5v9" stroke="#b8b8b8"/></svg>
<div class="se" style="left:89px;top:200px">ChangePassword.aspx</div>
<svg class="ic" style="left:47px;top:221px" width="7" height="10" viewBox="0 0 7 10"><path d="M1.5 1.5l4 3.5-4 3.5z" fill="#fff" stroke="#8a8a8a"/></svg>
<svg class="ic" style="left:68px;top:218px" width="16" height="16" viewBox="0 0 16 16"><rect x="1.5" y="1.5" width="13" height="13" fill="#fdf6cc" stroke="#6a7894"/><path d="M3 3.5h5" stroke="#4a7ad0"/><path d="M2.5 3.5h1" stroke="#d03030"/><path d="M4 6.5h2M4 9.5h2M4 12.5h2" stroke="#5a7ac0"/><path d="M8 6.5h5M8 9.5h5M8 12.5h5" stroke="#5a6a88"/><path d="M6.5 5v9" stroke="#b8b8b8"/></svg>
<div class="se" style="left:89px;top:218px">ChangePasswordSuccess.aspx</div>
<svg class="ic" style="left:47px;top:239px" width="7" height="10" viewBox="0 0 7 10"><path d="M1.5 1.5l4 3.5-4 3.5z" fill="#fff" stroke="#8a8a8a"/></svg>
<svg class="ic" style="left:68px;top:236px" width="16" height="16" viewBox="0 0 16 16"><rect x="1.5" y="1.5" width="13" height="13" fill="#fdf6cc" stroke="#6a7894"/><path d="M3 3.5h5" stroke="#4a7ad0"/><path d="M2.5 3.5h1" stroke="#d03030"/><path d="M4 6.5h2M4 9.5h2M4 12.5h2" stroke="#5a7ac0"/><path d="M8 6.5h5M8 9.5h5M8 12.5h5" stroke="#5a6a88"/><path d="M6.5 5v9" stroke="#b8b8b8"/></svg>
<div class="se" style="left:89px;top:236px">Login.aspx</div>
<div class="exe" style="left:48px;top:260px"></div>
<svg class="ic" style="left:68px;top:254px" width="16" height="16" viewBox="0 0 16 16"><rect x="1.5" y="1.5" width="13" height="13" fill="#fdf6cc" stroke="#6a7894"/><path d="M3 3.5h5" stroke="#4a7ad0"/><path d="M2.5 3.5h1" stroke="#d03030"/><path d="M4 6.5h2M4 9.5h2M4 12.5h2" stroke="#5a7ac0"/><path d="M8 6.5h5M8 9.5h5M8 12.5h5" stroke="#5a6a88"/><path d="M6.5 5v9" stroke="#b8b8b8"/></svg>
<div class="se" style="left:89px;top:254px">Register.aspx</div>
<svg class="ic" style="left:87px;top:272px" width="16" height="16" viewBox="0 0 16 16"><path d="M4.5 2.5h7l2 2v11h-9z" fill="#fff" stroke="#4a5a78"/><path d="M7 7.5h5M7 9.5h5M7 11.5h5M7 13.5h5" stroke="#50607a"/><path d="M1.5 2.5c3 0 4.5 1.5 4.5 5" stroke="#2a7ae0" stroke-width="1.6" fill="none"/><path d="M3.5 6.5l2.5 3 2.5-3z" fill="#2a7ae0"/></svg>
<div class="se" style="left:108px;top:272px">Register.aspx.cs</div>
<svg class="ic" style="left:87px;top:290px" width="16" height="16" viewBox="0 0 16 16"><path d="M4.5 2.5h7l2 2v11h-9z" fill="#fff" stroke="#4a5a78"/><path d="M7 7.5h5M7 9.5h5M7 11.5h5M7 13.5h5" stroke="#50607a"/><path d="M1.5 2.5c3 0 4.5 1.5 4.5 5" stroke="#2a7ae0" stroke-width="1.6" fill="none"/><path d="M3.5 6.5l2.5 3 2.5-3z" fill="#2a7ae0"/></svg>
<div class="se" style="left:108px;top:290px">Register.aspx.designer.cs</div>
<svg class="ic" style="left:68px;top:308px" width="16" height="16" viewBox="0 0 16 16"><path d="M2.5 1.5h8l3 3v11h-11z" fill="#fff" stroke="#4a5a78"/><path d="M4 5.5h6M4 7.5h6M4 9.5h4M4 11.5h4" stroke="#3a4a6a"/><circle cx="11.5" cy="12" r="3.5" fill="#3a8ae0"/><path d="M9.5 10.5c1.5 0 1.5 2 3 2.5M11 15c0-1 1-1.5 2-1.5" stroke="#2aa040" stroke-width="1.4" fill="none"/></svg>
<div class="se" style="left:89px;top:308px">Web.config</div>
<svg class="ic" style="left:28px;top:329px" width="7" height="10" viewBox="0 0 7 10"><path d="M1.5 1.5l4 3.5-4 3.5z" fill="#fff" stroke="#8a8a8a"/></svg>
<svg class="ic" style="left:49px;top:326px" width="16" height="16" viewBox="0 0 16 16"><path d="M0.5 2.5h5l1 1h8v11h-14z" fill="#c8ccd2" stroke="#6a6e76"/><rect x="0.5" y="5.5" width="15" height="9" fill="#e2e5e9" stroke="#6a6e76"/><rect x="9" y="8" width="6" height="8" rx="2" fill="#e8b030" stroke="#9a7018"/></svg>
<div class="se" style="left:70px;top:326px">App_Data</div>
<svg class="ic" style="left:49px;top:344px" width="16" height="16" viewBox="0 0 16 16"><path d="M0.5 2.5h5l1 1h8v11h-14z" fill="#e9b840" stroke="#9a7018"/><rect x="0.5" y="5.5" width="15" height="9" fill="#f5d068" stroke="#9a7018"/><rect x="1" y="10" width="14" height="4" fill="#e8b030"/></svg>
<div class="se" style="left:70px;top:344px">Common_Classes</div>
<div class="exe" style="left:29px;top:368px"></div>
<svg class="ic" style="left:49px;top:362px" width="16" height="16" viewBox="0 0 16 16"><path d="M0.5 3.5h5l1 1h7v9h-13z" fill="#e9b840" stroke="#9a7018"/><path d="M2.5 7.5h13l-2.5 7h-12z" fill="#f9dd80" stroke="#9a7018"/></svg>
<div class="se" style="left:70px;top:362px">DAL</div>
<svg class="ic" style="left:68px;top:380px" width="16" height="16" viewBox="0 0 16 16"><path d="M3.5 1.5h8l3 3v11h-11z" fill="#f4f6fa" stroke="#4a5a78"/><path d="M11.5 1.5v3h3" fill="none" stroke="#4a5a78"/><path d="M6 9.5h6M6 11.5h6M5 13.5h7" stroke="#7a8aa8"/><rect x="0" y="0.5" width="10" height="8" fill="#fff"/><path d="M4 2.3H2.8a1.6 2.2 0 0 0 0 4.4H4" stroke="#1a9a2a" stroke-width="1.5" fill="none"/><path d="M6.2 1v7M8.4 1v7M5 3.3h4.6M5 5.6h4.6" stroke="#1a9a2a" stroke-width="1.2"/></svg>
<div class="se" style="left:89px;top:380px">DBO_Repository .cs</div>
<div class="exe" style="left:29px;top:404px"></div>
<svg class="ic" style="left:49px;top:398px" width="16" height="16" viewBox="0 0 16 16"><path d="M0.5 3.5h5l1 1h7v9h-13z" fill="#e9b840" stroke="#9a7018"/><path d="M2.5 7.5h13l-2.5 7h-12z" fill="#f9dd80" stroke="#9a7018"/></svg>
<div class="se" style="left:70px;top:398px">DataAccessModel</div>
<svg class="ic" style="left:68px;top:416px" width="16" height="16" viewBox="0 0 16 16"><path d="M3.5 1.5h8l3 3v11h-11z" fill="#f4f6fa" stroke="#4a5a78"/><path d="M11.5 1.5v3h3" fill="none" stroke="#4a5a78"/><path d="M6 9.5h6M6 11.5h6M5 13.5h7" stroke="#7a8aa8"/><rect x="0" y="0.5" width="10" height="8" fill="#fff"/><path d="M4 2.3H2.8a1.6 2.2 0 0 0 0 4.4H4" stroke="#1a9a2a" stroke-width="1.5" fill="none"/><path d="M6.2 1v7M8.4 1v7M5 3.3h4.6M5 5.6h4.6" stroke="#1a9a2a" stroke-width="1.2"/></svg>
<div class="se" style="left:89px;top:416px">Author.cs</div>
<svg class="ic" style="left:68px;top:434px" width="16" height="16" viewBox="0 0 16 16"><path d="M3.5 1.5h8l3 3v11h-11z" fill="#f4f6fa" stroke="#4a5a78"/><path d="M11.5 1.5v3h3" fill="none" stroke="#4a5a78"/><path d="M6 9.5h6M6 11.5h6M5 13.5h7" stroke="#7a8aa8"/><rect x="0" y="0.5" width="10" height="8" fill="#fff"/><path d="M4 2.3H2.8a1.6 2.2 0 0 0 0 4.4H4" stroke="#1a9a2a" stroke-width="1.5" fill="none"/><path d="M6.2 1v7M8.4 1v7M5 3.3h4.6M5 5.6h4.6" stroke="#1a9a2a" stroke-width="1.2"/></svg>
<div class="se" style="left:89px;top:434px">BusinessEntity.cs</div>
<div class="exe" style="left:48px;top:458px"></div>
<svg class="ic" style="left:68px;top:452px" width="16" height="16" viewBox="0 0 16 16"><ellipse cx="5.5" cy="2.5" rx="4.5" ry="2" fill="#f8e890" stroke="#b09a30"/><path d="M1 2.5v10a4.5 2 0 0 0 9 0v-10" fill="#f0d050" stroke="#b09a30"/><ellipse cx="5.5" cy="2.5" rx="4.5" ry="2" fill="#f8ec98" stroke="#b09a30"/><path d="M7 9l2-2 2 2-2 2zM11 13l2-2 2 2-2 2zM9 10l3 2" stroke="#4a6ad0" fill="#e8eeff" stroke-width="1"/></svg>
<div class="se" style="left:89px;top:452px">DBO_Model.edmx</div>
<svg class="ic" style="left:87px;top:470px" width="16" height="16" viewBox="0 0 16 16"><path d="M4.5 2.5h7l2 2v11h-9z" fill="#fff" stroke="#4a5a78"/><path d="M7 7.5h5M7 9.5h5M7 11.5h5M7 13.5h5" stroke="#50607a"/><path d="M1.5 2.5c3 0 4.5 1.5 4.5 5" stroke="#2a7ae0" stroke-width="1.6" fill="none"/><path d="M3.5 6.5l2.5 3 2.5-3z" fill="#2a7ae0"/></svg>
<div class="se" style="left:108px;top:470px">DBO_Model.Designer.cs</div>
<svg class="ic" style="left:68px;top:488px" width="16" height="16" viewBox="0 0 16 16"><path d="M3.5 1.5h8l3 3v11h-11z" fill="#f4f6fa" stroke="#4a5a78"/><path d="M11.5 1.5v3h3" fill="none" stroke="#4a5a78"/><path d="M6 9.5h6M6 11.5h6M5 13.5h7" stroke="#7a8aa8"/><rect x="0" y="0.5" width="10" height="8" fill="#fff"/><path d="M4 2.3H2.8a1.6 2.2 0 0 0 0 4.4H4" stroke="#1a9a2a" stroke-width="1.5" fill="none"/><path d="M6.2 1v7M8.4 1v7M5 3.3h4.6M5 5.6h4.6" stroke="#1a9a2a" stroke-width="1.2"/></svg>
<div class="se" style="left:89px;top:488px">DocFolder.cs</div>
<svg class="ic" style="left:68px;top:506px" width="16" height="16" viewBox="0 0 16 16"><path d="M3.5 1.5h8l3 3v11h-11z" fill="#f4f6fa" stroke="#4a5a78"/><path d="M11.5 1.5v3h3" fill="none" stroke="#4a5a78"/><path d="M6 9.5h6M6 11.5h6M5 13.5h7" stroke="#7a8aa8"/><rect x="0" y="0.5" width="10" height="8" fill="#fff"/><path d="M4 2.3H2.8a1.6 2.2 0 0 0 0 4.4H4" stroke="#1a9a2a" stroke-width="1.5" fill="none"/><path d="M6.2 1v7M8.4 1v7M5 3.3h4.6M5 5.6h4.6" stroke="#1a9a2a" stroke-width="1.2"/></svg>
<div class="se" style="left:89px;top:506px">Document.cs</div>
<svg class="ic" style="left:68px;top:524px" width="16" height="16" viewBox="0 0 16 16"><path d="M3.5 1.5h8l3 3v11h-11z" fill="#f4f6fa" stroke="#4a5a78"/><path d="M11.5 1.5v3h3" fill="none" stroke="#4a5a78"/><path d="M6 9.5h6M6 11.5h6M5 13.5h7" stroke="#7a8aa8"/><rect x="0" y="0.5" width="10" height="8" fill="#fff"/><path d="M4 2.3H2.8a1.6 2.2 0 0 0 0 4.4H4" stroke="#1a9a2a" stroke-width="1.5" fill="none"/><path d="M6.2 1v7M8.4 1v7M5 3.3h4.6M5 5.6h4.6" stroke="#1a9a2a" stroke-width="1.2"/></svg>
<div class="se" style="left:89px;top:524px">License.cs</div>
<svg class="ic" style="left:68px;top:542px" width="16" height="16" viewBox="0 0 16 16"><path d="M3.5 1.5h8l3 3v11h-11z" fill="#f4f6fa" stroke="#4a5a78"/><path d="M11.5 1.5v3h3" fill="none" stroke="#4a5a78"/><path d="M6 9.5h6M6 11.5h6M5 13.5h7" stroke="#7a8aa8"/><rect x="0" y="0.5" width="10" height="8" fill="#fff"/><path d="M4 2.3H2.8a1.6 2.2 0 0 0 0 4.4H4" stroke="#1a9a2a" stroke-width="1.5" fill="none"/><path d="M6.2 1v7M8.4 1v7M5 3.3h4.6M5 5.6h4.6" stroke="#1a9a2a" stroke-width="1.2"/></svg>
<div class="se" style="left:89px;top:542px">SubAcct.cs</div>
<svg class="ic" style="left:68px;top:560px" width="16" height="16" viewBox="0 0 16 16"><path d="M3.5 1.5h8l3 3v11h-11z" fill="#f4f6fa" stroke="#4a5a78"/><path d="M11.5 1.5v3h3" fill="none" stroke="#4a5a78"/><path d="M6 9.5h6M6 11.5h6M5 13.5h7" stroke="#7a8aa8"/><rect x="0" y="0.5" width="10" height="8" fill="#fff"/><path d="M4 2.3H2.8a1.6 2.2 0 0 0 0 4.4H4" stroke="#1a9a2a" stroke-width="1.5" fill="none"/><path d="M6.2 1v7M8.4 1v7M5 3.3h4.6M5 5.6h4.6" stroke="#1a9a2a" stroke-width="1.2"/></svg>
<div class="se" style="left:89px;top:560px">UserProfile.cs</div>
<svg class="ic" style="left:28px;top:581px" width="7" height="10" viewBox="0 0 7 10"><path d="M1.5 1.5l4 3.5-4 3.5z" fill="#fff" stroke="#8a8a8a"/></svg>
<svg class="ic" style="left:49px;top:578px" width="16" height="16" viewBox="0 0 16 16"><path d="M0.5 2.5h5l1 1h8v11h-14z" fill="#e9b840" stroke="#9a7018"/><rect x="0.5" y="5.5" width="15" height="9" fill="#f5d068" stroke="#9a7018"/><rect x="1" y="10" width="14" height="4" fill="#e8b030"/></svg>
<div class="se" style="left:70px;top:578px">Images</div>
<svg class="ic" style="left:28px;top:599px" width="7" height="10" viewBox="0 0 7 10"><path d="M1.5 1.5l4 3.5-4 3.5z" fill="#fff" stroke="#8a8a8a"/></svg>
<svg class="ic" style="left:49px;top:596px" width="16" height="16" viewBox="0 0 16 16"><path d="M0.5 2.5h5l1 1h8v11h-14z" fill="#e9b840" stroke="#9a7018"/><rect x="0.5" y="5.5" width="15" height="9" fill="#f5d068" stroke="#9a7018"/><rect x="1" y="10" width="14" height="4" fill="#e8b030"/></svg>
<div class="se" style="left:70px;top:596px">Scripts</div>
<div class="exe" style="left:29px;top:620px"></div>
<svg class="ic" style="left:49px;top:614px" width="16" height="16" viewBox="0 0 16 16"><path d="M0.5 3.5h5l1 1h7v9h-13z" fill="#e9b840" stroke="#9a7018"/><path d="M2.5 7.5h13l-2.5 7h-12z" fill="#f9dd80" stroke="#9a7018"/></svg>
<div class="se" style="left:70px;top:614px">Styles</div>
<svg class="ic" style="left:68px;top:632px" width="16" height="16" viewBox="0 0 16 16"><path d="M3.5 1.5h8l3 3v11h-11z" fill="#eef2f8" stroke="#4a5f80"/><text x="0" y="13" font-size="13" font-weight="bold" font-family="Liberation Serif" fill="#9a1a1a">A</text><path d="M12 6v1M12 9v1M12 12v1" stroke="#2a7ae0" stroke-width="1.5"/></svg>
<div class="se" style="left:89px;top:632px">Site.css</div>
<div class="exe" style="left:29px;top:656px"></div>
<svg class="ic" style="left:49px;top:650px" width="16" height="16" viewBox="0 0 16 16"><path d="M0.5 3.5h5l1 1h7v9h-13z" fill="#e9b840" stroke="#9a7018"/><path d="M2.5 7.5h13l-2.5 7h-12z" fill="#f9dd80" stroke="#9a7018"/></svg>
<div class="se" style="left:70px;top:650px">Views</div>
<svg class="ic" style="left:68px;top:668px" width="16" height="16" viewBox="0 0 16 16"><path d="M0.5 2.5h5l1 1h8v11h-14z" fill="#e9b840" stroke="#9a7018"/><rect x="0.5" y="5.5" width="15" height="9" fill="#f5d068" stroke="#9a7018"/><rect x="1" y="10" width="14" height="4" fill="#e8b030"/></svg>
<div class="se" style="left:89px;top:668px">Consumer</div>
<svg class="ic" style="left:68px;top:686px" width="16" height="16" viewBox="0 0 16 16"><path d="M0.5 2.5h5l1 1h8v11h-14z" fill="#e9b840" stroke="#9a7018"/><rect x="0.5" y="5.5" width="15" height="9" fill="#f5d068" stroke="#9a7018"/><rect x="1" y="10" width="14" height="4" fill="#e8b030"/></svg>
<div class="se" style="left:89px;top:686px">Error</div>
<svg class="ic" style="left:68px;top:704px" width="16" height="16" viewBox="0 0 16 16"><path d="M0.5 2.5h5l1 1h8v11h-14z" fill="#e9b840" stroke="#9a7018"/><rect x="0.5" y="5.5" width="15" height="9" fill="#f5d068" stroke="#9a7018"/><rect x="1" y="10" width="14" height="4" fill="#e8b030"/></svg>
<div class="se" style="left:89px;top:704px">Partner</div>
<div class="exe" style="left:48px;top:728px"></div>
<svg class="ic" style="left:68px;top:722px" width="16" height="16" viewBox="0 0 16 16"><path d="M0.5 3.5h5l1 1h7v9h-13z" fill="#e9b840" stroke="#9a7018"/><path d="M2.5 7.5h13l-2.5 7h-12z" fill="#f9dd80" stroke="#9a7018"/></svg>
<div class="se" style="left:89px;top:722px">Publisher</div>
<div class="exe" style="left:67px;top:746px"></div>
<svg class="ic" style="left:87px;top:740px" width="16" height="16" viewBox="0 0 16 16"><path d="M0.5 3.5h5l1 1h7v9h-13z" fill="#e9b840" stroke="#9a7018"/><path d="M2.5 7.5h13l-2.5 7h-12z" fill="#f9dd80" stroke="#9a7018"/></svg>
<div class="se" style="left:108px;top:740px">Setup</div>
<svg class="ic" style="left:85px;top:761px" width="7" height="10" viewBox="0 0 7 10"><path d="M1.5 1.5l4 3.5-4 3.5z" fill="#fff" stroke="#8a8a8a"/></svg>
<svg class="ic" style="left:106px;top:758px" width="16" height="16" viewBox="0 0 16 16"><rect x="1.5" y="1.5" width="13" height="13" fill="#fdf6cc" stroke="#6a7894"/><path d="M3 3.5h5" stroke="#4a7ad0"/><path d="M2.5 3.5h1" stroke="#d03030"/><path d="M4 6.5h2M4 9.5h2M4 12.5h2" stroke="#5a7ac0"/><path d="M8 6.5h5M8 9.5h5M8 12.5h5" stroke="#5a6a88"/><path d="M6.5 5v9" stroke="#b8b8b8"/></svg>
<div class="se" style="left:127px;top:758px">Author.aspx</div>
<svg class="ic" style="left:85px;top:779px" width="7" height="10" viewBox="0 0 7 10"><path d="M1.5 1.5l4 3.5-4 3.5z" fill="#fff" stroke="#8a8a8a"/></svg>
<svg class="ic" style="left:106px;top:776px" width="16" height="16" viewBox="0 0 16 16"><rect x="1.5" y="1.5" width="13" height="13" fill="#fdf6cc" stroke="#6a7894"/><path d="M3 3.5h5" stroke="#4a7ad0"/><path d="M2.5 3.5h1" stroke="#d03030"/><path d="M4 6.5h2M4 9.5h2M4 12.5h2" stroke="#5a7ac0"/><path d="M8 6.5h5M8 9.5h5M8 12.5h5" stroke="#5a6a88"/><path d="M6.5 5v9" stroke="#b8b8b8"/></svg>
<div class="se" style="left:127px;top:776px">BusinesProfile.aspx</div>
<svg class="ic" style="left:85px;top:797px" width="7" height="10" viewBox="0 0 7 10"><path d="M1.5 1.5l4 3.5-4 3.5z" fill="#fff" stroke="#8a8a8a"/></svg>
<svg class="ic" style="left:106px;top:794px" width="16" height="16" viewBox="0 0 16 16"><rect x="1.5" y="1.5" width="13" height="13" fill="#fdf6cc" stroke="#6a7894"/><path d="M3 3.5h5" stroke="#4a7ad0"/><path d="M2.5 3.5h1" stroke="#d03030"/><path d="M4 6.5h2M4 9.5h2M4 12.5h2" stroke="#5a7ac0"/><path d="M8 6.5h5M8 9.5h5M8 12.5h5" stroke="#5a6a88"/><path d="M6.5 5v9" stroke="#b8b8b8"/></svg>
<div class="se" style="left:127px;top:794px">DocCategory.aspx</div>
<svg class="ic" style="left:85px;top:815px" width="7" height="10" viewBox="0 0 7 10"><path d="M1.5 1.5l4 3.5-4 3.5z" fill="#fff" stroke="#8a8a8a"/></svg>
<svg class="ic" style="left:106px;top:812px" width="16" height="16" viewBox="0 0 16 16"><rect x="1.5" y="1.5" width="13" height="13" fill="#fdf6cc" stroke="#6a7894"/><path d="M3 3.5h5" stroke="#4a7ad0"/><path d="M2.5 3.5h1" stroke="#d03030"/><path d="M4 6.5h2M4 9.5h2M4 12.5h2" stroke="#5a7ac0"/><path d="M8 6.5h5M8 9.5h5M8 12.5h5" stroke="#5a6a88"/><path d="M6.5 5v9" stroke="#b8b8b8"/></svg>
<div class="se" style="left:127px;top:812px">Keyword.aspx</div>
<svg class="ic" style="left:85px;top:833px" width="7" height="10" viewBox="0 0 7 10"><path d="M1.5 1.5l4 3.5-4 3.5z" fill="#fff" stroke="#8a8a8a"/></svg>
<svg class="ic" style="left:106px;top:830px" width="16" height="16" viewBox="0 0 16 16"><rect x="1.5" y="1.5" width="13" height="13" fill="#fdf6cc" stroke="#6a7894"/><path d="M3 3.5h5" stroke="#4a7ad0"/><path d="M2.5 3.5h1" stroke="#d03030"/><path d="M4 6.5h2M4 9.5h2M4 12.5h2" stroke="#5a7ac0"/><path d="M8 6.5h5M8 9.5h5M8 12.5h5" stroke="#5a6a88"/><path d="M6.5 5v9" stroke="#b8b8b8"/></svg>
<div class="se" style="left:127px;top:830px">License.aspx</div>
<svg class="ic" style="left:85px;top:851px" width="7" height="10" viewBox="0 0 7 10"><path d="M1.5 1.5l4 3.5-4 3.5z" fill="#fff" stroke="#8a8a8a"/></svg>
<svg class="ic" style="left:106px;top:848px" width="16" height="16" viewBox="0 0 16 16"><rect x="1.5" y="1.5" width="13" height="13" fill="#fdf6cc" stroke="#6a7894"/><path d="M3 3.5h5" stroke="#4a7ad0"/><path d="M2.5 3.5h1" stroke="#d03030"/><path d="M4 6.5h2M4 9.5h2M4 12.5h2" stroke="#5a7ac0"/><path d="M8 6.5h5M8 9.5h5M8 12.5h5" stroke="#5a6a88"/><path d="M6.5 5v9" stroke="#b8b8b8"/></svg>
<div class="se" style="left:127px;top:848px">SubAcct.aspx</div>
<svg class="ic" style="left:68px;top:866px" width="16" height="16" viewBox="0 0 16 16"><path d="M0.5 2.5h5l1 1h8v11h-14z" fill="#e9b840" stroke="#9a7018"/><rect x="0.5" y="5.5" width="15" height="9" fill="#f5d068" stroke="#9a7018"/><rect x="1" y="10" width="14" height="4" fill="#e8b030"/></svg>
<div class="se" style="left:89px;top:866px">SiteInfo</div>
<div class="exe" style="left:48px;top:890px"></div>
<svg class="ic" style="left:68px;top:884px" width="16" height="16" viewBox="0 0 16 16"><path d="M0.5 3.5h5l1 1h7v9h-13z" fill="#e9b840" stroke="#9a7018"/><path d="M2.5 7.5h13l-2.5 7h-12z" fill="#f9dd80" stroke="#9a7018"/></svg>
<div class="se" style="left:89px;top:884px">System_Admin</div>
<div class="exe" style="left:67px;top:908px"></div>
<svg class="ic" style="left:87px;top:902px" width="16" height="16" viewBox="0 0 16 16"><path d="M0.5 3.5h5l1 1h7v9h-13z" fill="#e9b840" stroke="#9a7018"/><path d="M2.5 7.5h13l-2.5 7h-12z" fill="#f9dd80" stroke="#9a7018"/></svg>
<div class="se" style="left:108px;top:902px">Setup</div>
<svg class="ic" style="left:85px;top:923px" width="7" height="10" viewBox="0 0 7 10"><path d="M1.5 1.5l4 3.5-4 3.5z" fill="#fff" stroke="#8a8a8a"/></svg>
<svg class="ic" style="left:106px;top:920px" width="16" height="16" viewBox="0 0 16 16"><rect x="1.5" y="1.5" width="13" height="13" fill="#fdf6cc" stroke="#6a7894"/><path d="M3 3.5h5" stroke="#4a7ad0"/><path d="M2.5 3.5h1" stroke="#d03030"/><path d="M4 6.5h2M4 9.5h2M4 12.5h2" stroke="#5a7ac0"/><path d="M8 6.5h5M8 9.5h5M8 12.5h5" stroke="#5a6a88"/><path d="M6.5 5v9" stroke="#b8b8b8"/></svg>
<div class="se" style="left:127px;top:920px">AccessMatrix.aspx</div>
<svg class="ic" style="left:66px;top:941px" width="7" height="10" viewBox="0 0 7 10"><path d="M1.5 1.5l4 3.5-4 3.5z" fill="#fff" stroke="#8a8a8a"/></svg>
<svg class="ic" style="left:87px;top:938px" width="16" height="16" viewBox="0 0 16 16"><rect x="1.5" y="1.5" width="13" height="13" fill="#fdf6cc" stroke="#6a7894"/><path d="M3 3.5h5" stroke="#4a7ad0"/><path d="M2.5 3.5h1" stroke="#d03030"/><path d="M4 6.5h2M4 9.5h2M4 12.5h2" stroke="#5a7ac0"/><path d="M8 6.5h5M8 9.5h5M8 12.5h5" stroke="#5a6a88"/><path d="M6.5 5v9" stroke="#b8b8b8"/></svg>
<div class="se" style="left:108px;top:938px">Audit_CRUD.aspx</div>
<svg class="ic" style="left:66px;top:959px" width="7" height="10" viewBox="0 0 7 10"><path d="M1.5 1.5l4 3.5-4 3.5z" fill="#fff" stroke="#8a8a8a"/></svg>
<svg class="ic" style="left:87px;top:956px" width="16" height="16" viewBox="0 0 16 16"><rect x="1.5" y="1.5" width="13" height="13" fill="#fdf6cc" stroke="#6a7894"/><path d="M3 3.5h5" stroke="#4a7ad0"/><path d="M2.5 3.5h1" stroke="#d03030"/><path d="M4 6.5h2M4 9.5h2M4 12.5h2" stroke="#5a7ac0"/><path d="M8 6.5h5M8 9.5h5M8 12.5h5" stroke="#5a6a88"/><path d="M6.5 5v9" stroke="#b8b8b8"/></svg>
<div class="se" style="left:108px;top:956px">Audit_CRUD_Log.aspx</div>
</div>
<div class="a" style="left:1897px;top:143px;width:17px;height:961px;background:linear-gradient(90deg,#e6e6e6,#f0f0f0 50%,#e8e8e8)"></div>
<div class="a" style="left:1897px;top:162px;width:15px;height:669px;border:1px solid #8a8a8a;border-radius:2px;background:linear-gradient(90deg,#f6f6f6,#e8e8e8 45%,#d3d3d6 55%,#dedee2)"></div>
<div class="a" style="left:1901px;top:493px;width:8px;height:8px;background:repeating-linear-gradient(#505050 0 1px,transparent 1px 3px)"></div>
<div class="ua" style="left:1901px;top:150px"></div>
<div class="da" style="left:1901px;top:1092px"></div>
<div class="a" style="left:1689px;top:1104px;width:208px;height:17px;background:linear-gradient(#e6e6e6,#f0f0f0 50%,#e8e8e8)"></div>
<div class="a" style="left:1897px;top:1104px;width:17px;height:17px;background:#f0f0f0"></div>
<div class="a" style="left:1708px;top:1105px;width:30px;height:14px;border:1px solid #8a8a8a;border-radius:2px;background:linear-gradient(#f6f6f6,#e8e8e8 45%,#d3d3d6 55%,#dedee2)"></div>
<div class="a" style="left:1719px;top:1108px;width:7px;height:7px;background:repeating-linear-gradient(90deg,#555 0 1px,transparent 1px 3px)"></div>
<div class="la" style="left:1696px;top:1108px"></div>
<div class="ra" style="left:1885px;top:1108px"></div>
<div class="a" style="left:1764px;top:1121px;width:75px;height:19px;background:#fff;border-radius:0 0 2px 2px"></div>
<svg class="ic" style="left:1694px;top:1123px" width="15" height="15" viewBox="0 0 15 15"><rect x="0.5" y="0.5" width="14" height="14" fill="#fff" stroke="#9aa0a8"/><circle cx="8.5" cy="6" r="3.5" fill="none" stroke="#888" stroke-width="1.2"/><path d="M6 8.5l-4 4" stroke="#888" stroke-width="1.5"/></svg>
<div class="a" style="left:1714px;top:1123px;color:#fff;white-space:nowrap">Soluti...</div>
<svg class="ic" style="left:1768px;top:1123px" width="16" height="16" viewBox="0 0 16 16"><rect x="4.5" y="0.5" width="11" height="9" fill="#fff" stroke="#3a70c0"/><rect x="4.5" y="0.5" width="11" height="2" fill="#4b86d6"/><path d="M0 5h7v5H0z" fill="#f0c850" stroke="#a88420"/><circle cx="9" cy="10" r="3" fill="#d8ecff" stroke="#334"/><path d="M11 12l3 3" stroke="#334" stroke-width="2"/></svg>
<div class="a" style="left:1789px;top:1123px;color:#000;white-space:nowrap">Soluti...</div>
<svg class="ic" style="left:1844px;top:1123px" width="16" height="16" viewBox="0 0 16 16"><rect x="0.5" y="0.5" width="13" height="11" fill="#fff" stroke="#3a70c0"/><rect x="0.5" y="0.5" width="13" height="2" fill="#4b86d6"/><rect x="6" y="8" width="2.5" height="8" fill="#2d6fd8"/><rect x="9.5" y="6" width="2.5" height="10" fill="#e23030"/><rect x="13" y="9" width="2.5" height="7" fill="#2aa040"/></svg>
<div class="a" style="left:1865px;top:1123px;color:#fff;white-space:nowrap">Team...</div>
<!-- editor scrollbars -->
<div class="a" style="left:1666px;top:124px;width:17px;height:996px;background:linear-gradient(90deg,#e6e6e6,#ededed 50%,#e8e8e8)"></div>
<div class="a" style="left:1666px;top:124px;width:17px;height:16px;border:1px solid #9aa3b5;background:linear-gradient(#eef1f6,#d5dbe6)"></div>
<svg class="ic" style="left:1668px;top:125px" width="13" height="14" viewBox="0 0 13 14"><path d="M1 6.5h11M1 8.5h11" stroke="#000"/><path d="M6.5 1l3 3h-6zM6.5 13l3-3h-6z" fill="#000"/><path d="M6.5 3v3M6.5 9v3" stroke="#000"/></svg>
<div class="ua" style="left:1670px;top:147px;border-bottom-color:#8a8a8a"></div>
<div class="da" style="left:1670px;top:1108px;border-top-color:#8a8a8a"></div>
<div class="a" style="left:1679px;top:157px;width:3px;height:51px;background:#9370db"></div><div class="a" style="left:1679px;top:209px;width:3px;height:28px;background:#9370db"></div><div class="a" style="left:1679px;top:241px;width:3px;height:32px;background:#9370db"></div><div class="a" style="left:1679px;top:281px;width:3px;height:11px;background:#9370db"></div><div class="a" style="left:1679px;top:297px;width:3px;height:13px;background:#9370db"></div><div class="a" style="left:1679px;top:320px;width:3px;height:6px;background:#9370db"></div><div class="a" style="left:1679px;top:327px;width:3px;height:9px;background:#9370db"></div><div class="a" style="left:1679px;top:346px;width:3px;height:10px;background:#9370db"></div><div class="a" style="left:1679px;top:359px;width:3px;height:42px;background:#9370db"></div><div class="a" style="left:1679px;top:402px;width:3px;height:28px;background:#9370db"></div><div class="a" style="left:1679px;top:434px;width:3px;height:51px;background:#9370db"></div><div class="a" style="left:1679px;top:486px;width:3px;height:5px;background:#9370db"></div><div class="a" style="left:1679px;top:499px;width:3px;height:6px;background:#9370db"></div><div class="a" style="left:1679px;top:507px;width:3px;height:8px;background:#9370db"></div><div class="a" style="left:1679px;top:517px;width:3px;height:9px;background:#9370db"></div><div class="a" style="left:1679px;top:536px;width:3px;height:4px;background:#9370db"></div><div class="a" style="left:1679px;top:547px;width:3px;height:6px;background:#9370db"></div><div class="a" style="left:1679px;top:554px;width:3px;height:10px;background:#9370db"></div><div class="a" style="left:1679px;top:569px;width:3px;height:3px;background:#9370db"></div><div class="a" style="left:1679px;top:574px;width:3px;height:4px;background:#9370db"></div><div class="a" style="left:1679px;top:581px;width:3px;height:30px;background:#9370db"></div><div class="a" style="left:1679px;top:615px;width:3px;height:30px;background:#9370db"></div><div class="a" style="left:1679px;top:654px;width:3px;height:22px;background:#9370db"></div><div class="a" style="left:1679px;top:688px;width:3px;height:23px;background:#9370db"></div><div class="a" style="left:1679px;top:731px;width:3px;height:36px;background:#9370db"></div><div class="a" style="left:1679px;top:776px;width:3px;height:4px;background:#9370db"></div><div class="a" style="left:1679px;top:781px;width:3px;height:7px;background:#9370db"></div><div class="a" style="left:1679px;top:791px;width:3px;height:4px;background:#9370db"></div><div class="a" style="left:1679px;top:796px;width:3px;height:39px;background:#9370db"></div><div class="a" style="left:1679px;top:841px;width:3px;height:4px;background:#9370db"></div><div class="a" style="left:1679px;top:846px;width:3px;height:18px;background:#9370db"></div><div class="a" style="left:1679px;top:873px;width:3px;height:9px;background:#9370db"></div><div class="a" style="left:1679px;top:883px;width:3px;height:7px;background:#9370db"></div><div class="a" style="left:1679px;top:893px;width:3px;height:4px;background:#9370db"></div><div class="a" style="left:1679px;top:899px;width:3px;height:6px;background:#9370db"></div><div class="a" style="left:1679px;top:909px;width:3px;height:35px;background:#9370db"></div><div class="a" style="left:1679px;top:948px;width:3px;height:99px;background:#9370db"></div><div class="a" style="left:1679px;top:1048px;width:3px;height:17px;background:#9370db"></div><div class="a" style="left:1679px;top:1066px;width:3px;height:4px;background:#9370db"></div><div class="a" style="left:1679px;top:1071px;width:3px;height:5px;background:#9370db"></div><div class="a" style="left:1679px;top:1084px;width:3px;height:8px;background:#9370db"></div><div class="a" style="left:1667px;top:541px;width:15px;height:7px;border:1px solid #8a8a8a;border-radius:2px;background:linear-gradient(90deg,#fff,#e0e0e0)"></div><div class="a" style="left:1679px;top:543px;width:3px;height:4px;background:#0000d0"></div>
<div class="a" style="left:6px;top:1120px;width:1660px;height:17px;background:linear-gradient(#ececec,#efefef 60%,#e4e4e8)"></div>
<div class="a" style="left:1666px;top:1120px;width:17px;height:17px;background:#fff"></div>
<div class="a" style="left:6px;top:1120px;width:59px;height:16px;background:#fff"></div>
<div class="a" style="left:10px;top:1121px;font-size:12px;color:#000;white-space:nowrap">100 %</div>
<div class="da" style="left:56px;top:1127px;border-top-color:#222;border-left-width:3.5px;border-right-width:3.5px"></div>
<div class="la" style="left:72px;top:1124px;border-right-color:#8a8a8a"></div>
<div class="a" style="left:84px;top:1121px;width:1293px;height:14px;border:1px solid #8a8a8a;border-radius:2px;background:linear-gradient(#f8f8f8,#ececec 45%,#d8d8dc 55%,#e2e2e6)"></div>
<div class="a" style="left:726px;top:1124px;width:7px;height:7px;background:repeating-linear-gradient(90deg,#555 0 1px,transparent 1px 3px)"></div>
<div class="ra" style="left:1654px;top:1124px;border-left-color:#606060"></div>
<!-- tabs -->
<div class="a" style="left:21px;top:98px;width:220px;height:22px;border-radius:2px 2px 0 0;background:linear-gradient(#fffcf4,#fff4d8 52%,#ffe8a6 56%,#ffe8a6)"></div>
<svg class="ic" style="left:28px;top:102px" width="13" height="15" viewBox="0 0 13 15"><path d="M0.5 0.5h8l4 4v10h-12z" fill="#fff" stroke="#8a8a8a"/><path d="M8.5 0.5v4h4" fill="#eee" stroke="#8a8a8a"/></svg>
<div class="a" style="left:47px;top:102px;font-size:12px;color:#000;white-space:nowrap">Telerik.Web...1 [dynamic]</div>
<svg class="ic" style="left:185px;top:103px" width="8" height="11" viewBox="0 0 8 11"><path d="M2 5V3a2 2 0 0 1 4 0v2" stroke="#8090c0" fill="none" stroke-width="1.2"/><rect x="0.5" y="5" width="7" height="5.5" fill="#6f88d8"/></svg>
<svg class="ic" style="left:224px;top:106px" width="9" height="9" viewBox="0 0 9 9"><path d="M1 1l7 7M8 1L1 8" stroke="#5e5844" stroke-width="1.3"/></svg>
<svg class="ic" style="left:247px;top:102px" width="15" height="15" viewBox="0 0 15 15"><rect x="0.5" y="1.5" width="14" height="12" fill="#fff" stroke="#4a6ab8"/><rect x="0.5" y="1.5" width="14" height="3" fill="#5b8fe0"/><rect x="1" y="5" width="3" height="8" fill="#f0d850"/></svg>
<div class="a" style="left:266px;top:102px;font-size:12px;color:#fff;white-space:nowrap">Site.Master</div>
<div class="dd" style="left:1671px;top:109px;border-left-width:4px;border-right-width:4px;border-top:4px solid #c8d0de"></div>
<!-- title buttons -->
<div class="a" style="left:1823px;top:-3px;width:95px;height:20px;border:1px solid #c8c8c8;border-radius:0 0 5px 5px;background:#000"></div>
<div class="a" style="left:1825px;top:0;width:24px;height:15px;border-radius:0 0 0 4px;background:linear-gradient(#8a8a8a 0,#5a5a5a 45%,#0a0a0c 50%,#1a1c22);border:1px solid #777"></div>
<div class="a" style="left:1850px;top:0;width:24px;height:15px;background:linear-gradient(#8a8a8a 0,#5a5a5a 45%,#0a0a0c 50%,#1a1c22);border:1px solid #777"></div>
<div class="a" style="left:1874px;top:0;width:43px;height:15px;border-radius:0 0 4px 0;background:linear-gradient(#c47a6a 0,#b04a30 45%,#9a1a08 55%,#c05a40);border:1px solid #c8a8a0"></div>
<div class="a" style="left:1832px;top:8px;width:11px;height:3px;background:#f0f0f0;box-shadow:0 0 0 1px #2a2a40"></div>
<svg class="ic" style="left:1855px;top:1px" width="13" height="12" viewBox="0 0 13 12"><rect x="4" y="1" width="7" height="7" fill="none" stroke="#f0f0f0" stroke-width="1.5"/><rect x="1.5" y="4" width="7" height="7" fill="#222" stroke="#f0f0f0" stroke-width="1.5"/><rect x="4" y="6.5" width="2" height="2" fill="none" stroke="#f0f0f0"/></svg>
<svg class="ic" style="left:1889px;top:2px" width="12" height="10" viewBox="0 0 12 10"><path d="M2 1l8 8M10 1L2 9" stroke="#fff" stroke-width="2.6"/></svg>
<svg class="ic" style="left:0px;top:2px" width="16" height="12" viewBox="0 0 16 12"><path d="M1 6c0-4 4-4 7 0s7 4 7 0-4-4-7 0-7 4-7 0" stroke="#3a9ad8" stroke-width="2" fill="none"/><path d="M8 6c3 4 7 4 7 0s-4-4-7 0" stroke="#7a4ad0" stroke-width="2" fill="none"/></svg>
<!-- status -->
<div class="a dots" style="left:0;top:1141px;width:1920px;height:5px"></div><div class="a" style="left:0;top:1146px;width:1920px;height:24px;background:#293955"></div><div class="a" style="left:18px;top:1165px;width:24px;height:24px;border-radius:50%;background:radial-gradient(circle at 50% 20%,#e8eef4,#a8b8c8 60%,#6a7a90)"></div>
<div class="a" style="left:4px;top:1152px;color:#fff;white-space:nowrap">Ready</div>
<div class="a" style="left:1566px;top:1152px;color:#fff;white-space:nowrap">Ln 2099</div>
<div class="a" style="left:1658px;top:1152px;color:#fff;white-space:nowrap">Col 28</div>
<div class="a" style="left:1750px;top:1152px;color:#fff;white-space:nowrap">Ch 28</div>
<div class="a" style="left:1885px;top:1152px;color:#fff;white-space:nowrap">INS</div>

</body></html>
